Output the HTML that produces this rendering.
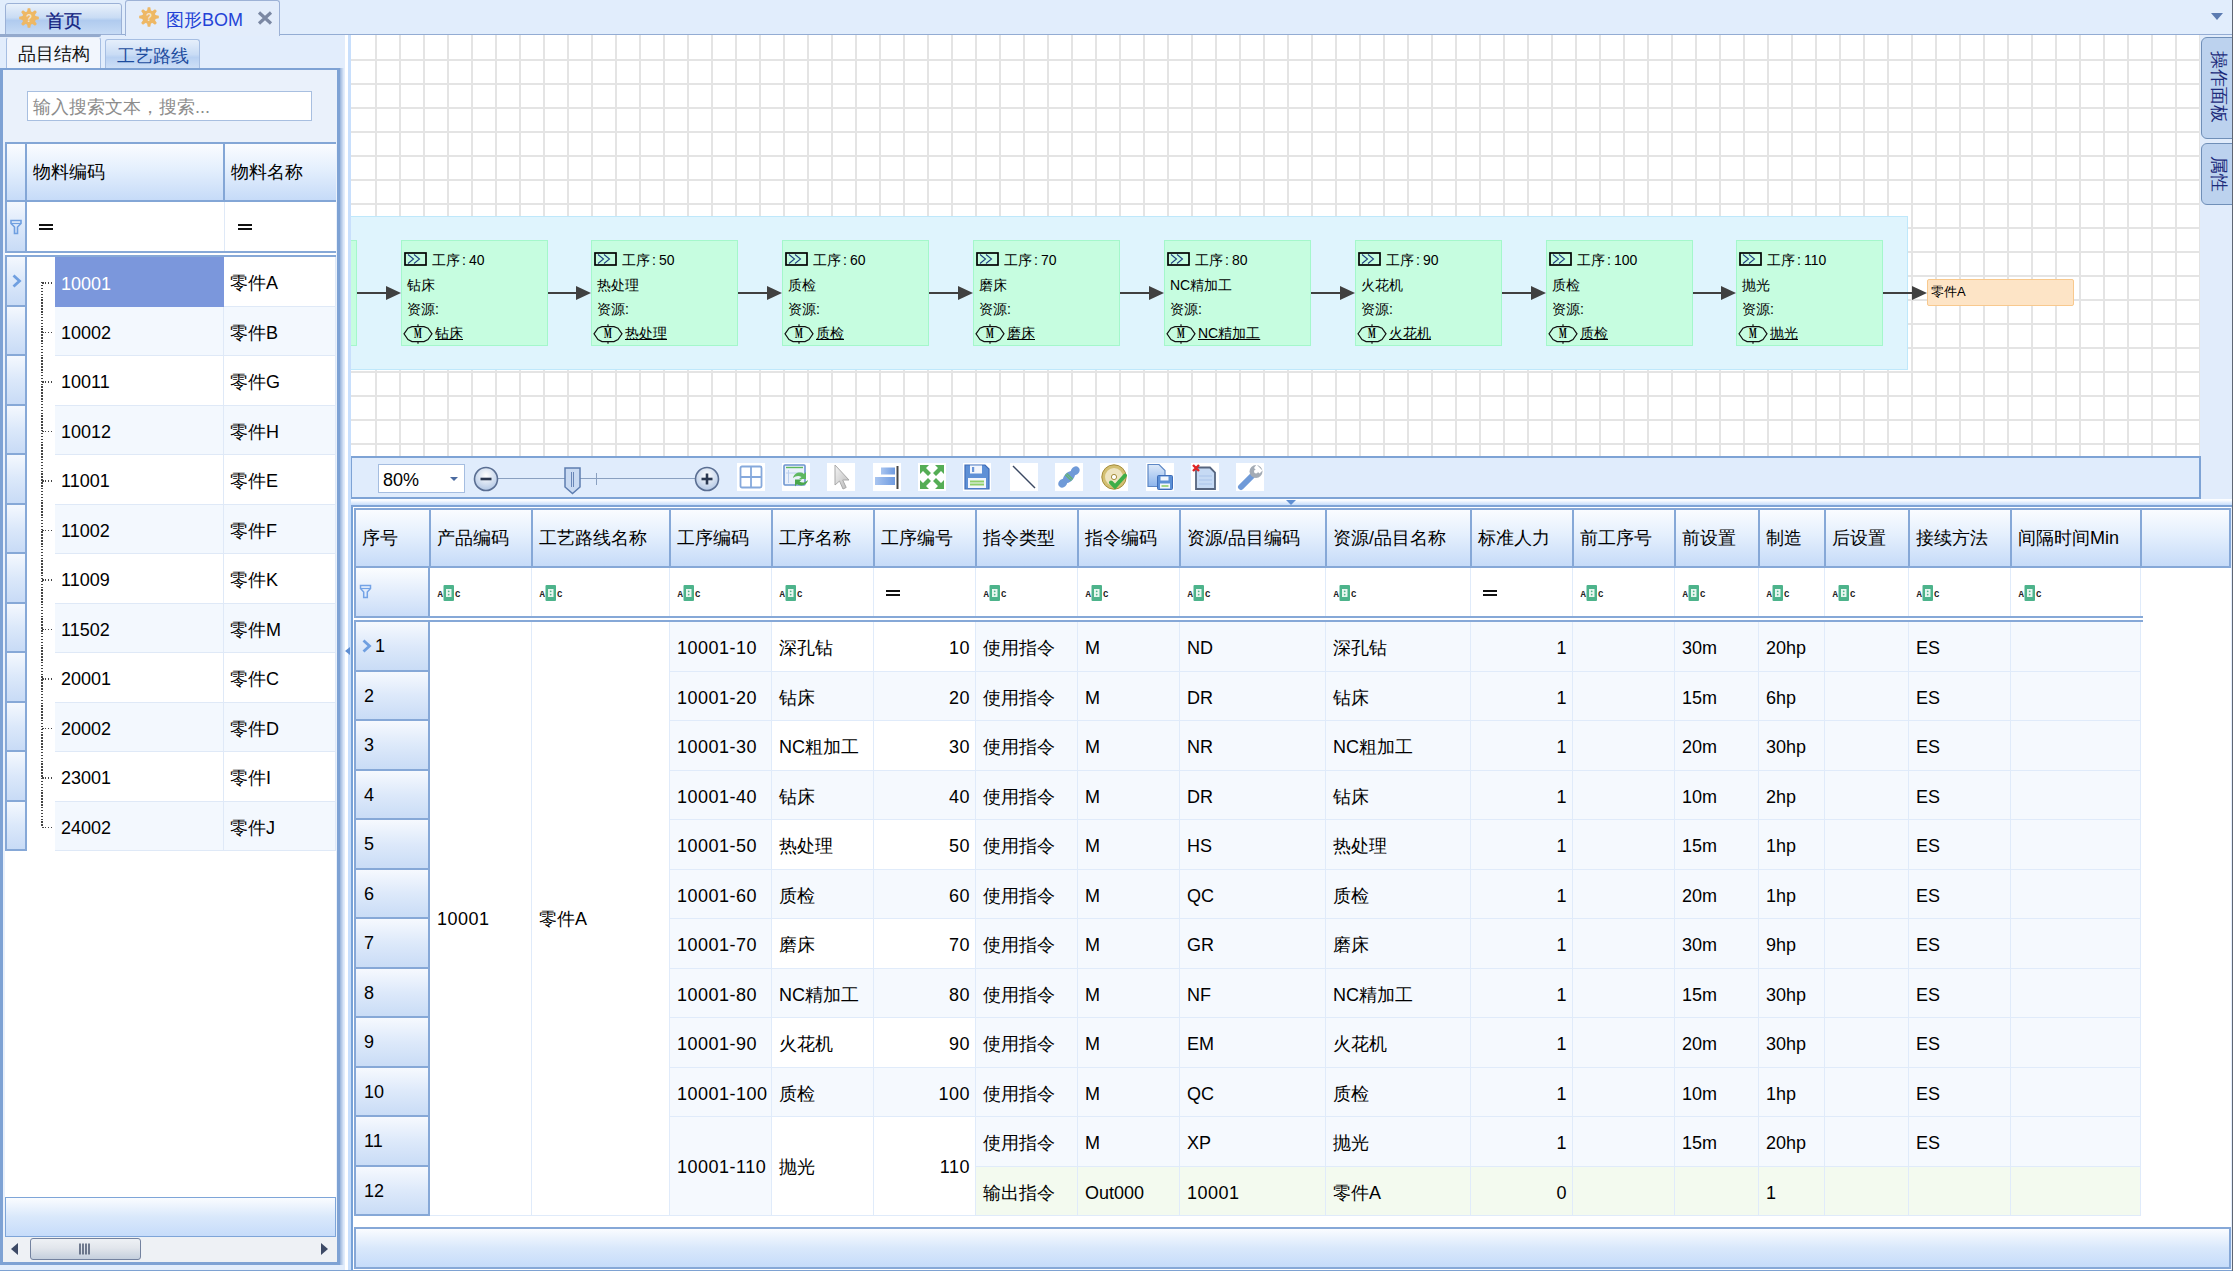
<!DOCTYPE html><html><head><meta charset="utf-8"><style>
*{box-sizing:border-box;margin:0;padding:0}
html,body{width:2233px;height:1271px;overflow:hidden}
body{position:relative;background:#e2edfc;font-family:"Liberation Sans",sans-serif;font-size:18px;color:#000}
.a{position:absolute}
.t{position:absolute;white-space:nowrap;line-height:20px}
.hd{position:absolute;background:linear-gradient(#fafcff,#e4effd 45%,#c6dbf8);border-right:2px solid #83a6d6}
.ind{position:absolute;background:linear-gradient(#f4f8fe,#dbe8fa 50%,#c8dbf6);border-bottom:2px solid #86a8d7;border-right:2px solid #86a8d7}
.c{position:absolute;border-right:1px solid #dfe9f7;border-bottom:1px solid #dfe9f7;white-space:nowrap;line-height:20px;padding-left:6px;padding-top:4px;display:flex;align-items:center}
</style></head><body><div class="a" style="left:0;top:0;width:2233px;height:35px;background:#e1edfc;border-bottom:1.5px solid #93acd3"></div><div class="a" style="left:5px;top:3px;width:117px;height:32px;border:1px solid #9bb1d6;border-radius:3px 3px 0 0;background:linear-gradient(#e9f1fb,#c9dcf4 45%,#b0cbef 55%,#c6dbf5)"></div><svg class="a" style="left:19px;top:8px" width="20" height="20" viewBox="0 0 20 20"><path d="M16.31 8.05 L19.82 8.72 L19.82 11.28 L16.31 11.95 L15.84 13.08 L17.85 16.03 L16.03 17.85 L13.08 15.84 L11.95 16.31 L11.28 19.82 L8.72 19.82 L8.05 16.31 L6.92 15.84 L3.97 17.85 L2.15 16.03 L4.16 13.08 L3.69 11.95 L0.18 11.28 L0.18 8.72 L3.69 8.05 L4.16 6.92 L2.15 3.97 L3.97 2.15 L6.92 4.16 L8.05 3.69 L8.72 0.18 L11.28 0.18 L11.95 3.69 L13.08 4.16 L16.03 2.15 L17.85 3.97 L15.84 6.92Z" fill="#eeb865"/><circle cx="10" cy="10" r="6.8" fill="#eeb865"/><text x="10" y="14" font-size="10" text-anchor="middle" fill="#f3e6d2" font-weight="bold" font-family="Liberation Sans">?</text></svg><div class="t" style="left:46px;top:11px;color:#102080;-webkit-text-stroke:0.3px #102080">首页</div><div class="a" style="left:125px;top:0;width:155px;height:36px;border:1px solid #9db2d6;border-bottom:none;border-radius:3px 3px 0 0;background:#e3edfb"></div><svg class="a" style="left:139px;top:7px" width="20" height="20" viewBox="0 0 20 20"><path d="M16.31 8.05 L19.82 8.72 L19.82 11.28 L16.31 11.95 L15.84 13.08 L17.85 16.03 L16.03 17.85 L13.08 15.84 L11.95 16.31 L11.28 19.82 L8.72 19.82 L8.05 16.31 L6.92 15.84 L3.97 17.85 L2.15 16.03 L4.16 13.08 L3.69 11.95 L0.18 11.28 L0.18 8.72 L3.69 8.05 L4.16 6.92 L2.15 3.97 L3.97 2.15 L6.92 4.16 L8.05 3.69 L8.72 0.18 L11.28 0.18 L11.95 3.69 L13.08 4.16 L16.03 2.15 L17.85 3.97 L15.84 6.92Z" fill="#eeb865"/><circle cx="10" cy="10" r="6.8" fill="#eeb865"/><text x="10" y="14" font-size="10" text-anchor="middle" fill="#f3e6d2" font-weight="bold" font-family="Liberation Sans">?</text></svg><div class="t" style="left:166px;top:10px;color:#2443d6">图形BOM</div><svg class="a" style="left:257px;top:11px" width="16" height="14" viewBox="0 0 16 14"><path d="M2 1.5l12 11M14 1.5l-12 11" stroke="#7b88a3" stroke-width="3.2"/></svg><div class="a" style="left:2211px;top:13px;width:0;height:0;border-left:6px solid transparent;border-right:6px solid transparent;border-top:7px solid #5b7bb1"></div><div class="a" style="left:0;top:34px;width:101px;height:2.6px;background:#94aacd;border-radius:0 0 2px 0"></div><div class="a" style="left:6px;top:37px;width:95px;height:33px;border:1px solid #a6bee2;border-top-color:#e8eff9;border-bottom:none;border-radius:3px 3px 0 0;background:#f2f6fd"></div><div class="t" style="left:18px;top:44px;color:#111">品目结构</div><div class="a" style="left:105px;top:39px;width:95px;height:30px;border:1px solid #a6bee2;border-bottom:none;border-radius:3px 3px 0 0;background:linear-gradient(#e6effb,#c9dcf5 50%,#b9d1f2 60%,#cfe0f7)"></div><div class="t" style="left:117px;top:46px;color:#1d4c9e">工艺路线</div><div class="a" style="left:0;top:68px;width:340px;height:1197px;border:3px solid #7ea2d4;border-top-width:2px;background:#eaf1fb"></div><div class="a" style="left:27px;top:91px;width:285px;height:30px;border:1px solid #a8bfe0;background:#fff"></div><div class="t" style="left:33px;top:97px;color:#8c8c8c">输入搜索文本，搜索...</div><div class="a" style="left:5px;top:142px;width:331px;height:1055px;background:#fff"></div><div class="a" style="left:5px;top:142px;width:331px;height:60px;border-top:2px solid #83a6d6;border-bottom:2px solid #83a6d6"></div><div class="hd" style="left:5px;top:144px;width:22px;height:56px;border-left:2px solid #83a6d6"></div><div class="hd" style="left:27px;top:144px;width:198px;height:56px"></div><div class="hd" style="left:225px;top:144px;width:111px;height:56px;border-right:none"></div><div class="t" style="left:33px;top:162px">物料编码</div><div class="t" style="left:231px;top:162px">物料名称</div><div class="ind" style="left:5px;top:202px;width:22px;height:49px;border-left:2px solid #86a8d7;border-bottom:none"></div><div class="a" style="left:224px;top:202px;width:1px;height:49px;background:#dfe9f7"></div><svg class="a" style="left:9px;top:219px" width="14" height="16" viewBox="0 0 14 16"><path d="M2 1.5h10v3l-3.5 3.5v6.5h-3v-6.5L2 4.5z" fill="none" stroke="#6f9fe0" stroke-width="1.6"/><path d="M2 4.5h10" stroke="#6f9fe0" stroke-width="1.2"/></svg><div class="a" style="left:39px;top:223.5px;width:14px;height:6px;border-top:2px solid #111;border-bottom:2px solid #111"></div><div class="a" style="left:238px;top:223.5px;width:14px;height:6px;border-top:2px solid #111;border-bottom:2px solid #111"></div><div class="a" style="left:5px;top:251px;width:331px;height:6px;border-top:2px solid #86a8d7;border-bottom:2px solid #86a8d7;background:#fff"></div><div class="ind" style="left:5px;top:257.0px;width:22px;height:49.5px;border-left:2px solid #86a8d7"></div><div class="c" style="left:55px;top:257.0px;width:169px;height:49.5px;background:#7b97dc;color:#fff;border:none">10001</div><div class="c" style="left:224px;top:257.0px;width:112px;height:49.5px;background:#fff">零件A</div><div class="a" style="left:42px;top:282.0px;width:12px;height:1.6px;background:repeating-linear-gradient(90deg,#444 0 1.5px,transparent 1.5px 2.9px)"></div><div class="ind" style="left:5px;top:306.5px;width:22px;height:49.5px;border-left:2px solid #86a8d7"></div><div class="c" style="left:55px;top:306.5px;width:169px;height:49.5px;background:#f3f8fe">10002</div><div class="c" style="left:224px;top:306.5px;width:112px;height:49.5px;background:#f3f8fe">零件B</div><div class="a" style="left:42px;top:331.5px;width:12px;height:1.6px;background:repeating-linear-gradient(90deg,#444 0 1.5px,transparent 1.5px 2.9px)"></div><div class="ind" style="left:5px;top:356.0px;width:22px;height:49.5px;border-left:2px solid #86a8d7"></div><div class="c" style="left:55px;top:356.0px;width:169px;height:49.5px;background:#fff">10011</div><div class="c" style="left:224px;top:356.0px;width:112px;height:49.5px;background:#fff">零件G</div><div class="a" style="left:42px;top:381.0px;width:12px;height:1.6px;background:repeating-linear-gradient(90deg,#444 0 1.5px,transparent 1.5px 2.9px)"></div><div class="ind" style="left:5px;top:405.5px;width:22px;height:49.5px;border-left:2px solid #86a8d7"></div><div class="c" style="left:55px;top:405.5px;width:169px;height:49.5px;background:#f3f8fe">10012</div><div class="c" style="left:224px;top:405.5px;width:112px;height:49.5px;background:#f3f8fe">零件H</div><div class="a" style="left:42px;top:430.5px;width:12px;height:1.6px;background:repeating-linear-gradient(90deg,#444 0 1.5px,transparent 1.5px 2.9px)"></div><div class="ind" style="left:5px;top:455.0px;width:22px;height:49.5px;border-left:2px solid #86a8d7"></div><div class="c" style="left:55px;top:455.0px;width:169px;height:49.5px;background:#fff">11001</div><div class="c" style="left:224px;top:455.0px;width:112px;height:49.5px;background:#fff">零件E</div><div class="a" style="left:42px;top:480.0px;width:12px;height:1.6px;background:repeating-linear-gradient(90deg,#444 0 1.5px,transparent 1.5px 2.9px)"></div><div class="ind" style="left:5px;top:504.5px;width:22px;height:49.5px;border-left:2px solid #86a8d7"></div><div class="c" style="left:55px;top:504.5px;width:169px;height:49.5px;background:#f3f8fe">11002</div><div class="c" style="left:224px;top:504.5px;width:112px;height:49.5px;background:#f3f8fe">零件F</div><div class="a" style="left:42px;top:529.5px;width:12px;height:1.6px;background:repeating-linear-gradient(90deg,#444 0 1.5px,transparent 1.5px 2.9px)"></div><div class="ind" style="left:5px;top:554.0px;width:22px;height:49.5px;border-left:2px solid #86a8d7"></div><div class="c" style="left:55px;top:554.0px;width:169px;height:49.5px;background:#fff">11009</div><div class="c" style="left:224px;top:554.0px;width:112px;height:49.5px;background:#fff">零件K</div><div class="a" style="left:42px;top:579.0px;width:12px;height:1.6px;background:repeating-linear-gradient(90deg,#444 0 1.5px,transparent 1.5px 2.9px)"></div><div class="ind" style="left:5px;top:603.5px;width:22px;height:49.5px;border-left:2px solid #86a8d7"></div><div class="c" style="left:55px;top:603.5px;width:169px;height:49.5px;background:#f3f8fe">11502</div><div class="c" style="left:224px;top:603.5px;width:112px;height:49.5px;background:#f3f8fe">零件M</div><div class="a" style="left:42px;top:628.5px;width:12px;height:1.6px;background:repeating-linear-gradient(90deg,#444 0 1.5px,transparent 1.5px 2.9px)"></div><div class="ind" style="left:5px;top:653.0px;width:22px;height:49.5px;border-left:2px solid #86a8d7"></div><div class="c" style="left:55px;top:653.0px;width:169px;height:49.5px;background:#fff">20001</div><div class="c" style="left:224px;top:653.0px;width:112px;height:49.5px;background:#fff">零件C</div><div class="a" style="left:42px;top:678.0px;width:12px;height:1.6px;background:repeating-linear-gradient(90deg,#444 0 1.5px,transparent 1.5px 2.9px)"></div><div class="ind" style="left:5px;top:702.5px;width:22px;height:49.5px;border-left:2px solid #86a8d7"></div><div class="c" style="left:55px;top:702.5px;width:169px;height:49.5px;background:#f3f8fe">20002</div><div class="c" style="left:224px;top:702.5px;width:112px;height:49.5px;background:#f3f8fe">零件D</div><div class="a" style="left:42px;top:727.5px;width:12px;height:1.6px;background:repeating-linear-gradient(90deg,#444 0 1.5px,transparent 1.5px 2.9px)"></div><div class="ind" style="left:5px;top:752.0px;width:22px;height:49.5px;border-left:2px solid #86a8d7"></div><div class="c" style="left:55px;top:752.0px;width:169px;height:49.5px;background:#fff">23001</div><div class="c" style="left:224px;top:752.0px;width:112px;height:49.5px;background:#fff">零件I</div><div class="a" style="left:42px;top:777.0px;width:12px;height:1.6px;background:repeating-linear-gradient(90deg,#444 0 1.5px,transparent 1.5px 2.9px)"></div><div class="ind" style="left:5px;top:801.5px;width:22px;height:49.5px;border-left:2px solid #86a8d7"></div><div class="c" style="left:55px;top:801.5px;width:169px;height:49.5px;background:#f3f8fe">24002</div><div class="c" style="left:224px;top:801.5px;width:112px;height:49.5px;background:#f3f8fe">零件J</div><div class="a" style="left:42px;top:826.5px;width:12px;height:1.6px;background:repeating-linear-gradient(90deg,#444 0 1.5px,transparent 1.5px 2.9px)"></div><svg class="a" style="left:11px;top:274px" width="11" height="14" viewBox="0 0 11 14"><path d="M2.5 1.5l6 5.5-6 5.5" fill="none" stroke="#6f9fe0" stroke-width="2.8"/></svg><div class="a" style="left:41px;top:282px;width:1.6px;height:545px;background:repeating-linear-gradient(#444 0 1.5px,transparent 1.5px 2.9px)"></div><div class="a" style="left:5px;top:1197px;width:331px;height:40px;border:1.5px solid #7ea5d8;background:linear-gradient(#fafcff,#d9e8fb 50%,#c6dcfa)"></div><div class="a" style="left:3px;top:1237px;width:334px;height:25px;background:#eef1f5"></div><div class="a" style="left:30px;top:1238px;width:111px;height:22px;border:1.5px solid #73829f;border-radius:3px;background:linear-gradient(#eef1f5,#e2e6ec 45%,#c4cfdd)"></div><svg class="a" style="left:79px;top:1243px" width="12" height="12" viewBox="0 0 12 12"><path d="M1 0.5v11M4 0.5v11M7 0.5v11M10 0.5v11" stroke="#3f4c66" stroke-width="1.4"/></svg><div class="a" style="left:11px;top:1243px;width:0;height:0;border-top:6px solid transparent;border-bottom:6px solid transparent;border-right:7px solid #3d4a66"></div><div class="a" style="left:321px;top:1243px;width:0;height:0;border-top:6px solid transparent;border-bottom:6px solid transparent;border-left:7px solid #3d4a66"></div><div class="a" style="left:339px;top:35px;width:12px;height:1236px;background:linear-gradient(90deg,transparent 6px,#ffffff 6px,#ffffff 9px,#c8dffc 9px)"></div><div class="a" style="left:340px;top:68px;width:4px;height:1197px;background:linear-gradient(90deg,#98b3da,rgba(226,237,252,0))"></div><div class="a" style="left:345px;top:647px;width:0;height:0;border-top:4px solid transparent;border-bottom:4px solid transparent;border-right:5px solid #5f8fd3"></div><div class="a" style="left:351px;top:35px;width:1849px;height:421px;background-color:#fff;overflow:hidden"><div class="a" style="left:2px;top:0;width:1847px;height:421px;background-image:linear-gradient(90deg,transparent 22px,#e4e4e4 22px);background-size:24px 24px"></div><div class="a" style="left:0;top:2px;width:1849px;height:419px;background-image:linear-gradient(transparent 22px,#e4e4e4 22px);background-size:24px 24px"></div><div class="a" style="left:0;top:181px;width:1557px;height:154px;background:#dff4fd;border:1px solid #bfe8fb;border-left:none"></div><div class="a" style="left:-5px;top:205px;width:11px;height:106px;background:#c6fde0;border:1.5px solid #a4f7cb"></div><div class="a" style="left:6.0px;top:257px;width:32.0px;height:2px;background:#404040"></div><div class="a" style="left:35.0px;top:251px;width:0;height:0;border-top:7px solid transparent;border-bottom:7px solid transparent;border-left:15px solid #404040"></div><div class="a" style="left:50.0px;top:205px;width:147px;height:106px;background:#c6fde0;border:1.5px solid #a4f7cb"></div><svg class="a" style="left:53.0px;top:217px" width="23" height="14" viewBox="0 0 23 14"><rect x="1" y="1" width="21" height="12" fill="none" stroke="#000" stroke-width="1.7"/><path d="M4 2.5l5.5 4.5-5.5 4.5M10 2.5l5.5 4.5-5.5 4.5" fill="none" stroke="#1f3f80" stroke-width="1.1"/></svg><div class="t" style="left:81.0px;top:217px;font-size:14px;line-height:16px">工序<span style="margin:0 3px 0 2px">:</span>40</div><div class="t" style="left:56.0px;top:242px;font-size:14px;line-height:16px">钻床</div><div class="t" style="left:56.0px;top:266px;font-size:14px;line-height:16px">资源:</div><svg class="a" style="left:52.0px;top:289px" width="30" height="20" viewBox="0 0 30 20"><path d="M1 9.8L5 4.2L9 2.6H21L25 4.2L29 9.8L25 15.6L21 17.6H9L5 15.6Z" fill="none" stroke="#111" stroke-width="1.2"/><path d="M15 0.3V2.6M15 17.6V19.8" stroke="#111" stroke-width="1.2"/><text x="15" y="13.6" font-size="15" font-weight="bold" text-anchor="middle" font-family="Liberation Serif" transform="translate(15 0) scale(0.55 1) translate(-15 0)">M</text></svg><div class="t" style="left:84.0px;top:290px;font-size:14px;line-height:16px;text-decoration:underline">钻床</div><div class="a" style="left:197.0px;top:257px;width:31.0px;height:2px;background:#404040"></div><div class="a" style="left:225.0px;top:251px;width:0;height:0;border-top:7px solid transparent;border-bottom:7px solid transparent;border-left:15px solid #404040"></div><div class="a" style="left:240.0px;top:205px;width:147px;height:106px;background:#c6fde0;border:1.5px solid #a4f7cb"></div><svg class="a" style="left:243.0px;top:217px" width="23" height="14" viewBox="0 0 23 14"><rect x="1" y="1" width="21" height="12" fill="none" stroke="#000" stroke-width="1.7"/><path d="M4 2.5l5.5 4.5-5.5 4.5M10 2.5l5.5 4.5-5.5 4.5" fill="none" stroke="#1f3f80" stroke-width="1.1"/></svg><div class="t" style="left:271.0px;top:217px;font-size:14px;line-height:16px">工序<span style="margin:0 3px 0 2px">:</span>50</div><div class="t" style="left:246.0px;top:242px;font-size:14px;line-height:16px">热处理</div><div class="t" style="left:246.0px;top:266px;font-size:14px;line-height:16px">资源:</div><svg class="a" style="left:242.0px;top:289px" width="30" height="20" viewBox="0 0 30 20"><path d="M1 9.8L5 4.2L9 2.6H21L25 4.2L29 9.8L25 15.6L21 17.6H9L5 15.6Z" fill="none" stroke="#111" stroke-width="1.2"/><path d="M15 0.3V2.6M15 17.6V19.8" stroke="#111" stroke-width="1.2"/><text x="15" y="13.6" font-size="15" font-weight="bold" text-anchor="middle" font-family="Liberation Serif" transform="translate(15 0) scale(0.55 1) translate(-15 0)">M</text></svg><div class="t" style="left:274.0px;top:290px;font-size:14px;line-height:16px;text-decoration:underline">热处理</div><div class="a" style="left:387.0px;top:257px;width:32.0px;height:2px;background:#404040"></div><div class="a" style="left:416.0px;top:251px;width:0;height:0;border-top:7px solid transparent;border-bottom:7px solid transparent;border-left:15px solid #404040"></div><div class="a" style="left:431.0px;top:205px;width:147px;height:106px;background:#c6fde0;border:1.5px solid #a4f7cb"></div><svg class="a" style="left:434.0px;top:217px" width="23" height="14" viewBox="0 0 23 14"><rect x="1" y="1" width="21" height="12" fill="none" stroke="#000" stroke-width="1.7"/><path d="M4 2.5l5.5 4.5-5.5 4.5M10 2.5l5.5 4.5-5.5 4.5" fill="none" stroke="#1f3f80" stroke-width="1.1"/></svg><div class="t" style="left:462.0px;top:217px;font-size:14px;line-height:16px">工序<span style="margin:0 3px 0 2px">:</span>60</div><div class="t" style="left:437.0px;top:242px;font-size:14px;line-height:16px">质检</div><div class="t" style="left:437.0px;top:266px;font-size:14px;line-height:16px">资源:</div><svg class="a" style="left:433.0px;top:289px" width="30" height="20" viewBox="0 0 30 20"><path d="M1 9.8L5 4.2L9 2.6H21L25 4.2L29 9.8L25 15.6L21 17.6H9L5 15.6Z" fill="none" stroke="#111" stroke-width="1.2"/><path d="M15 0.3V2.6M15 17.6V19.8" stroke="#111" stroke-width="1.2"/><text x="15" y="13.6" font-size="15" font-weight="bold" text-anchor="middle" font-family="Liberation Serif" transform="translate(15 0) scale(0.55 1) translate(-15 0)">M</text></svg><div class="t" style="left:465.0px;top:290px;font-size:14px;line-height:16px;text-decoration:underline">质检</div><div class="a" style="left:578.0px;top:257px;width:32.0px;height:2px;background:#404040"></div><div class="a" style="left:607.0px;top:251px;width:0;height:0;border-top:7px solid transparent;border-bottom:7px solid transparent;border-left:15px solid #404040"></div><div class="a" style="left:622.0px;top:205px;width:147px;height:106px;background:#c6fde0;border:1.5px solid #a4f7cb"></div><svg class="a" style="left:625.0px;top:217px" width="23" height="14" viewBox="0 0 23 14"><rect x="1" y="1" width="21" height="12" fill="none" stroke="#000" stroke-width="1.7"/><path d="M4 2.5l5.5 4.5-5.5 4.5M10 2.5l5.5 4.5-5.5 4.5" fill="none" stroke="#1f3f80" stroke-width="1.1"/></svg><div class="t" style="left:653.0px;top:217px;font-size:14px;line-height:16px">工序<span style="margin:0 3px 0 2px">:</span>70</div><div class="t" style="left:628.0px;top:242px;font-size:14px;line-height:16px">磨床</div><div class="t" style="left:628.0px;top:266px;font-size:14px;line-height:16px">资源:</div><svg class="a" style="left:624.0px;top:289px" width="30" height="20" viewBox="0 0 30 20"><path d="M1 9.8L5 4.2L9 2.6H21L25 4.2L29 9.8L25 15.6L21 17.6H9L5 15.6Z" fill="none" stroke="#111" stroke-width="1.2"/><path d="M15 0.3V2.6M15 17.6V19.8" stroke="#111" stroke-width="1.2"/><text x="15" y="13.6" font-size="15" font-weight="bold" text-anchor="middle" font-family="Liberation Serif" transform="translate(15 0) scale(0.55 1) translate(-15 0)">M</text></svg><div class="t" style="left:656.0px;top:290px;font-size:14px;line-height:16px;text-decoration:underline">磨床</div><div class="a" style="left:769.0px;top:257px;width:32.0px;height:2px;background:#404040"></div><div class="a" style="left:798.0px;top:251px;width:0;height:0;border-top:7px solid transparent;border-bottom:7px solid transparent;border-left:15px solid #404040"></div><div class="a" style="left:813.0px;top:205px;width:147px;height:106px;background:#c6fde0;border:1.5px solid #a4f7cb"></div><svg class="a" style="left:816.0px;top:217px" width="23" height="14" viewBox="0 0 23 14"><rect x="1" y="1" width="21" height="12" fill="none" stroke="#000" stroke-width="1.7"/><path d="M4 2.5l5.5 4.5-5.5 4.5M10 2.5l5.5 4.5-5.5 4.5" fill="none" stroke="#1f3f80" stroke-width="1.1"/></svg><div class="t" style="left:844.0px;top:217px;font-size:14px;line-height:16px">工序<span style="margin:0 3px 0 2px">:</span>80</div><div class="t" style="left:819.0px;top:242px;font-size:14px;line-height:16px">NC精加工</div><div class="t" style="left:819.0px;top:266px;font-size:14px;line-height:16px">资源:</div><svg class="a" style="left:815.0px;top:289px" width="30" height="20" viewBox="0 0 30 20"><path d="M1 9.8L5 4.2L9 2.6H21L25 4.2L29 9.8L25 15.6L21 17.6H9L5 15.6Z" fill="none" stroke="#111" stroke-width="1.2"/><path d="M15 0.3V2.6M15 17.6V19.8" stroke="#111" stroke-width="1.2"/><text x="15" y="13.6" font-size="15" font-weight="bold" text-anchor="middle" font-family="Liberation Serif" transform="translate(15 0) scale(0.55 1) translate(-15 0)">M</text></svg><div class="t" style="left:847.0px;top:290px;font-size:14px;line-height:16px;text-decoration:underline">NC精加工</div><div class="a" style="left:960.0px;top:257px;width:32.0px;height:2px;background:#404040"></div><div class="a" style="left:989.0px;top:251px;width:0;height:0;border-top:7px solid transparent;border-bottom:7px solid transparent;border-left:15px solid #404040"></div><div class="a" style="left:1004.0px;top:205px;width:147px;height:106px;background:#c6fde0;border:1.5px solid #a4f7cb"></div><svg class="a" style="left:1007.0px;top:217px" width="23" height="14" viewBox="0 0 23 14"><rect x="1" y="1" width="21" height="12" fill="none" stroke="#000" stroke-width="1.7"/><path d="M4 2.5l5.5 4.5-5.5 4.5M10 2.5l5.5 4.5-5.5 4.5" fill="none" stroke="#1f3f80" stroke-width="1.1"/></svg><div class="t" style="left:1035.0px;top:217px;font-size:14px;line-height:16px">工序<span style="margin:0 3px 0 2px">:</span>90</div><div class="t" style="left:1010.0px;top:242px;font-size:14px;line-height:16px">火花机</div><div class="t" style="left:1010.0px;top:266px;font-size:14px;line-height:16px">资源:</div><svg class="a" style="left:1006.0px;top:289px" width="30" height="20" viewBox="0 0 30 20"><path d="M1 9.8L5 4.2L9 2.6H21L25 4.2L29 9.8L25 15.6L21 17.6H9L5 15.6Z" fill="none" stroke="#111" stroke-width="1.2"/><path d="M15 0.3V2.6M15 17.6V19.8" stroke="#111" stroke-width="1.2"/><text x="15" y="13.6" font-size="15" font-weight="bold" text-anchor="middle" font-family="Liberation Serif" transform="translate(15 0) scale(0.55 1) translate(-15 0)">M</text></svg><div class="t" style="left:1038.0px;top:290px;font-size:14px;line-height:16px;text-decoration:underline">火花机</div><div class="a" style="left:1151.0px;top:257px;width:32.0px;height:2px;background:#404040"></div><div class="a" style="left:1180.0px;top:251px;width:0;height:0;border-top:7px solid transparent;border-bottom:7px solid transparent;border-left:15px solid #404040"></div><div class="a" style="left:1195.0px;top:205px;width:147px;height:106px;background:#c6fde0;border:1.5px solid #a4f7cb"></div><svg class="a" style="left:1198.0px;top:217px" width="23" height="14" viewBox="0 0 23 14"><rect x="1" y="1" width="21" height="12" fill="none" stroke="#000" stroke-width="1.7"/><path d="M4 2.5l5.5 4.5-5.5 4.5M10 2.5l5.5 4.5-5.5 4.5" fill="none" stroke="#1f3f80" stroke-width="1.1"/></svg><div class="t" style="left:1226.0px;top:217px;font-size:14px;line-height:16px">工序<span style="margin:0 3px 0 2px">:</span>100</div><div class="t" style="left:1201.0px;top:242px;font-size:14px;line-height:16px">质检</div><div class="t" style="left:1201.0px;top:266px;font-size:14px;line-height:16px">资源:</div><svg class="a" style="left:1197.0px;top:289px" width="30" height="20" viewBox="0 0 30 20"><path d="M1 9.8L5 4.2L9 2.6H21L25 4.2L29 9.8L25 15.6L21 17.6H9L5 15.6Z" fill="none" stroke="#111" stroke-width="1.2"/><path d="M15 0.3V2.6M15 17.6V19.8" stroke="#111" stroke-width="1.2"/><text x="15" y="13.6" font-size="15" font-weight="bold" text-anchor="middle" font-family="Liberation Serif" transform="translate(15 0) scale(0.55 1) translate(-15 0)">M</text></svg><div class="t" style="left:1229.0px;top:290px;font-size:14px;line-height:16px;text-decoration:underline">质检</div><div class="a" style="left:1342.0px;top:257px;width:31.0px;height:2px;background:#404040"></div><div class="a" style="left:1370.0px;top:251px;width:0;height:0;border-top:7px solid transparent;border-bottom:7px solid transparent;border-left:15px solid #404040"></div><div class="a" style="left:1385.0px;top:205px;width:147px;height:106px;background:#c6fde0;border:1.5px solid #a4f7cb"></div><svg class="a" style="left:1388.0px;top:217px" width="23" height="14" viewBox="0 0 23 14"><rect x="1" y="1" width="21" height="12" fill="none" stroke="#000" stroke-width="1.7"/><path d="M4 2.5l5.5 4.5-5.5 4.5M10 2.5l5.5 4.5-5.5 4.5" fill="none" stroke="#1f3f80" stroke-width="1.1"/></svg><div class="t" style="left:1416.0px;top:217px;font-size:14px;line-height:16px">工序<span style="margin:0 3px 0 2px">:</span>110</div><div class="t" style="left:1391.0px;top:242px;font-size:14px;line-height:16px">抛光</div><div class="t" style="left:1391.0px;top:266px;font-size:14px;line-height:16px">资源:</div><svg class="a" style="left:1387.0px;top:289px" width="30" height="20" viewBox="0 0 30 20"><path d="M1 9.8L5 4.2L9 2.6H21L25 4.2L29 9.8L25 15.6L21 17.6H9L5 15.6Z" fill="none" stroke="#111" stroke-width="1.2"/><path d="M15 0.3V2.6M15 17.6V19.8" stroke="#111" stroke-width="1.2"/><text x="15" y="13.6" font-size="15" font-weight="bold" text-anchor="middle" font-family="Liberation Serif" transform="translate(15 0) scale(0.55 1) translate(-15 0)">M</text></svg><div class="t" style="left:1419.0px;top:290px;font-size:14px;line-height:16px;text-decoration:underline">抛光</div><div class="a" style="left:1532.0px;top:257px;width:32.0px;height:2px;background:#404040"></div><div class="a" style="left:1561.0px;top:251px;width:0;height:0;border-top:7px solid transparent;border-bottom:7px solid transparent;border-left:15px solid #404040"></div><div class="a" style="left:1576px;top:244px;width:147px;height:27px;background:#fde4c6;border:1px solid #f8c98e;border-radius:2px"></div><div class="t" style="left:1580px;top:249px;font-size:13px;line-height:16px">零件A</div></div><div class="a" style="left:2200px;top:35px;width:33px;height:472px;background:#e1ecfb"></div><div class="a" style="left:2201px;top:37px;width:40px;height:102px;border:1px solid #6f8fb8;border-radius:6px;background:#bcd2ee"></div><div class="a" style="left:2201px;top:143px;width:40px;height:62px;border:1px solid #6f8fb8;border-radius:6px;background:#bcd2ee"></div><div class="t" style="left:2183px;top:77px;width:72px;height:20px;transform:rotate(90deg);color:#1b2a7a;line-height:20px;text-align:center">操作面板</div><div class="t" style="left:2201px;top:164px;width:36px;height:20px;transform:rotate(90deg);color:#1b2a7a;line-height:20px;text-align:center">属性</div><div class="a" style="left:351px;top:456px;width:1850px;height:43px;background:#e0ecfc;border:2px solid #7ea3d5;border-left:1px solid #7ea3d5"></div><div class="a" style="left:378px;top:464px;width:87px;height:29px;border:1px solid #a5bde0;background:#fff"></div><div class="t" style="left:383px;top:470px;font-size:18px">80%</div><div class="a" style="left:450px;top:477px;width:0;height:0;border-left:4px solid transparent;border-right:4px solid transparent;border-top:4px solid #4a6aa0"></div><div class="a" style="left:498px;top:478px;width:197px;height:1px;background:#8aa0c0"></div><div class="a" style="left:596px;top:473px;width:1px;height:12px;background:#8aa0c0"></div><svg class="a" style="left:473px;top:466px" width="26" height="26" viewBox="0 0 26 26"><defs><radialGradient id="g486" cx="0.5" cy="0.35" r="0.6"><stop offset="0" stop-color="#ffffff"/><stop offset="1" stop-color="#b8cbe6"/></radialGradient></defs><circle cx="13" cy="13" r="11.5" fill="url(#g486)" stroke="#5a6e92" stroke-width="1.6"/><path d="M7.5 13h11" stroke="#2b3850" stroke-width="2.6"/></svg><svg class="a" style="left:694px;top:466px" width="26" height="26" viewBox="0 0 26 26"><defs><radialGradient id="g707" cx="0.5" cy="0.35" r="0.6"><stop offset="0" stop-color="#ffffff"/><stop offset="1" stop-color="#b8cbe6"/></radialGradient></defs><circle cx="13" cy="13" r="11.5" fill="url(#g707)" stroke="#5a6e92" stroke-width="1.6"/><path d="M7.5 13h11" stroke="#2b3850" stroke-width="2.6"/><path d="M13 7.5v11" stroke="#2b3850" stroke-width="2.6"/></svg><svg class="a" style="left:563px;top:466px" width="19" height="29" viewBox="0 0 19 29"><path d="M2 2h15v19l-7.5 6.5L2 21z" fill="#c9daf2" stroke="#5d7db0" stroke-width="1.5"/><path d="M8.5 6v15M10.5 6v15" stroke="#5d7db0" stroke-width="0.9"/></svg><div class="a" style="left:737px;top:463px;width:28px;height:28px;background:#fff"></div><svg class="a" style="left:737px;top:463px" width="28" height="28" viewBox="0 0 28 28"><rect x="3.5" y="3.5" width="21" height="21" rx="1.5" fill="none" stroke="#86a9dc" stroke-width="1.8"/><path d="M14 3.5v21M3.5 14h21" stroke="#86a9dc" stroke-width="1.8"/></svg><div class="a" style="left:782px;top:463px;width:28px;height:28px;background:#fff"></div><svg class="a" style="left:782px;top:463px" width="28" height="28" viewBox="0 0 28 28"><rect x="2" y="2" width="21" height="20" rx="1" fill="#eaf1fb" stroke="#6d95d0" stroke-width="1.6"/><path d="M4 4.5h17" stroke="#5cb85c" stroke-width="1.4"/><path d="M6.5 7v13M4 10h17" stroke="#bcd0ee" stroke-width="1"/><path d="M11 15c1-5 7-7 11-4l2-2v7h-7l2.5-2c-3-2-6-1-8.5 1z" fill="#5fb860"/><path d="M26 17c-1 5-7 7-11 4l-2 2.5v-7h7l-2.5 2c3 2 6 1 8.5-1.5z" fill="#4aa84c"/></svg><div class="a" style="left:827px;top:463px;width:28px;height:28px;background:#fff"></div><svg class="a" style="left:827px;top:463px" width="28" height="28" viewBox="0 0 28 28"><defs><linearGradient id="cg" x1="0" y1="0" x2="1" y2="1"><stop offset="0" stop-color="#f4f4f4"/><stop offset="1" stop-color="#b9b9b9"/></linearGradient></defs><path d="M8 2v20l4.5-4 3.5 8 3.2-1.5-3.5-7.5H22z" fill="url(#cg)" stroke="#a9a9a9" stroke-width="1"/></svg><div class="a" style="left:873px;top:463px;width:28px;height:28px;background:#fff"></div><svg class="a" style="left:873px;top:463px" width="28" height="28" viewBox="0 0 28 28"><defs><linearGradient id="ag" x1="0" y1="0" x2="1" y2="0"><stop offset="0" stop-color="#a9c5f0"/><stop offset="1" stop-color="#6f9be0"/></linearGradient></defs><rect x="8" y="4.5" width="14" height="7" fill="url(#ag)"/><rect x="2" y="14" width="20" height="8" fill="url(#ag)"/><path d="M24.5 3v23" stroke="#444" stroke-width="2"/></svg><div class="a" style="left:918px;top:463px;width:28px;height:28px;background:#fff"></div><svg class="a" style="left:918px;top:463px" width="28" height="28" viewBox="0 0 28 28"><g fill="#55ad55"><path d="M2 2h9l-3 3 5 5-3 3-5-5-3 3z"/><path d="M26 2v9l-3-3-5 5-3-3 5-5-3-3z"/><path d="M2 26v-9l3 3 5-5 3 3-5 5 3 3z"/><path d="M26 26h-9l3-3-5-5 3-3 5 5 3-3z"/></g></svg><div class="a" style="left:963px;top:463px;width:28px;height:28px;background:#fff"></div><svg class="a" style="left:963px;top:463px" width="28" height="28" viewBox="0 0 28 28"><path d="M2 2h20l4 4v20H2z" fill="#5e90d6" stroke="#3f6db8" stroke-width="1.2"/><rect x="7" y="2.5" width="12" height="8" fill="#f2f6fc"/><rect x="9" y="4" width="2.2" height="5" fill="#6a96d8"/><rect x="5" y="15" width="18" height="10" fill="#f2f6fc"/><path d="M7 18.5h14M7 21.5h14" stroke="#8fcf6a" stroke-width="2"/></svg><div class="a" style="left:1010px;top:463px;width:28px;height:28px;background:#fff"></div><svg class="a" style="left:1010px;top:463px" width="28" height="28" viewBox="0 0 28 28"><path d="M3 3l22 22" stroke="#3b4862" stroke-width="1.5"/></svg><div class="a" style="left:1055px;top:463px;width:28px;height:28px;background:#fff"></div><svg class="a" style="left:1055px;top:463px" width="28" height="28" viewBox="0 0 28 28"><g transform="rotate(-45 14 14)"><path d="M0.5 14c0-4 5-5 8-3 3-2 8-2 11 0 3-2 8-1 8 3s-5 5-8 3c-3 2-8 2-11 0-3 2-8 1-8-3z" fill="#6f9ad8"/><path d="M13 9.8v8.4M15 9.8v8.4" stroke="#62b868" stroke-width="1.2"/></g></svg><div class="a" style="left:1100px;top:463px;width:28px;height:28px;background:#fff"></div><svg class="a" style="left:1100px;top:463px" width="28" height="28" viewBox="0 0 28 28"><circle cx="14" cy="14" r="12.2" fill="#d3bf72" stroke="#a58d3c" stroke-width="1"/><circle cx="14" cy="14" r="9" fill="#eee4c0"/><circle cx="14" cy="14" r="2.6" fill="#fff" stroke="#a58d3c" stroke-width="1"/><path d="M11 19.5l4 4 10-11" fill="none" stroke="#3cae48" stroke-width="4" stroke-linecap="round"/></svg><div class="a" style="left:1146px;top:463px;width:28px;height:28px;background:#fff"></div><svg class="a" style="left:1146px;top:463px" width="28" height="28" viewBox="0 0 28 28"><defs><linearGradient id="dg" x1="0" y1="0" x2="0" y2="1"><stop offset="0" stop-color="#dde9f9"/><stop offset="1" stop-color="#8db5ec"/></linearGradient></defs><path d="M2 1.5h11l6 6v16H2z" fill="url(#dg)" stroke="#5e88c6" stroke-width="1.2"/><rect x="11.5" y="12.5" width="15" height="14" rx="1" fill="#5b8fd6" stroke="#3f6db8" stroke-width="1"/><rect x="14.5" y="13.5" width="8" height="4" fill="#f2f6fc"/><rect x="14" y="20.5" width="10" height="5" fill="#f2f6fc"/><path d="M15.5 23h7" stroke="#8fcf6a" stroke-width="1.6"/></svg><div class="a" style="left:1191px;top:463px;width:28px;height:28px;background:#fff"></div><svg class="a" style="left:1191px;top:463px" width="28" height="28" viewBox="0 0 28 28"><path d="M5 4.5h14l5 5V26H5z" fill="#c6daf4" stroke="#56657f" stroke-width="1.8"/><path d="M8 13h13M8 17h13M8 21h13" stroke="#a9c3ea" stroke-width="1.2"/><path d="M2 2l6 6M8 2l-6 6" stroke="#e02424" stroke-width="2.4"/></svg><div class="a" style="left:1236px;top:463px;width:28px;height:28px;background:#fff"></div><svg class="a" style="left:1236px;top:463px" width="28" height="28" viewBox="0 0 28 28"><path d="M5 24l12-12" stroke="#6f9ad8" stroke-width="6" stroke-linecap="round"/><circle cx="20" cy="8.5" r="6.5" fill="#a3abb5"/><path d="M20.5 1.5l6 6-3 3-5.5-5.5z" fill="#fff"/><circle cx="20" cy="8.5" r="2" fill="#fff"/></svg><div class="a" style="left:351px;top:499px;width:1882px;height:8px;background:linear-gradient(#fbfdff 20%,#c6ddfb);border-bottom:2px solid #7ea3d5"></div><div class="a" style="left:1286px;top:500px;width:0;height:0;border-left:5px solid transparent;border-right:5px solid transparent;border-top:5px solid #5f8fd3"></div><div class="a" style="left:351px;top:507px;width:1880px;height:764px;background:#fff"></div><div class="a" style="left:354px;top:508px;width:1877px;height:60px;border:2px solid #86a8d7;background:linear-gradient(#fafcff,#e4effd 45%,#c6dbf8)"></div><div class="a" style="left:429px;top:510px;width:2px;height:56px;background:#86a8d7"></div><div class="a" style="left:531px;top:510px;width:2px;height:56px;background:#86a8d7"></div><div class="a" style="left:669px;top:510px;width:2px;height:56px;background:#86a8d7"></div><div class="a" style="left:771px;top:510px;width:2px;height:56px;background:#86a8d7"></div><div class="a" style="left:873px;top:510px;width:2px;height:56px;background:#86a8d7"></div><div class="a" style="left:975px;top:510px;width:2px;height:56px;background:#86a8d7"></div><div class="a" style="left:1077px;top:510px;width:2px;height:56px;background:#86a8d7"></div><div class="a" style="left:1179px;top:510px;width:2px;height:56px;background:#86a8d7"></div><div class="a" style="left:1325px;top:510px;width:2px;height:56px;background:#86a8d7"></div><div class="a" style="left:1470px;top:510px;width:2px;height:56px;background:#86a8d7"></div><div class="a" style="left:1572px;top:510px;width:2px;height:56px;background:#86a8d7"></div><div class="a" style="left:1674px;top:510px;width:2px;height:56px;background:#86a8d7"></div><div class="a" style="left:1758px;top:510px;width:2px;height:56px;background:#86a8d7"></div><div class="a" style="left:1824px;top:510px;width:2px;height:56px;background:#86a8d7"></div><div class="a" style="left:1908px;top:510px;width:2px;height:56px;background:#86a8d7"></div><div class="a" style="left:2010px;top:510px;width:2px;height:56px;background:#86a8d7"></div><div class="a" style="left:2140px;top:510px;width:2px;height:56px;background:#86a8d7"></div><div class="t" style="left:362px;top:528px">序号</div><div class="t" style="left:437px;top:528px">产品编码</div><div class="t" style="left:539px;top:528px">工艺路线名称</div><div class="t" style="left:677px;top:528px">工序编码</div><div class="t" style="left:779px;top:528px">工序名称</div><div class="t" style="left:881px;top:528px">工序编号</div><div class="t" style="left:983px;top:528px">指令类型</div><div class="t" style="left:1085px;top:528px">指令编码</div><div class="t" style="left:1187px;top:528px">资源/品目编码</div><div class="t" style="left:1333px;top:528px">资源/品目名称</div><div class="t" style="left:1478px;top:528px">标准人力</div><div class="t" style="left:1580px;top:528px">前工序号</div><div class="t" style="left:1682px;top:528px">前设置</div><div class="t" style="left:1766px;top:528px">制造</div><div class="t" style="left:1832px;top:528px">后设置</div><div class="t" style="left:1916px;top:528px">接续方法</div><div class="t" style="left:2018px;top:528px">间隔时间Min</div><div class="a" style="left:354px;top:568px;width:76px;height:49px;border-left:2px solid #86a8d7;border-right:2px solid #86a8d7;background:linear-gradient(#fbfdff,#c9dcf8)"></div><svg class="a" style="left:359px;top:584px" width="13" height="15" viewBox="0 0 13 15"><path d="M1.5 1.5h10v3l-3.2 3.5v5.5h-3.6v-5.5L1.5 4.5z" fill="none" stroke="#74a3e6" stroke-width="1.5"/><path d="M1.5 4.5h10" stroke="#74a3e6" stroke-width="1.2"/></svg><div class="a" style="left:531px;top:568px;width:1px;height:49px;background:#e0ebfa"></div><svg class="a" style="left:437px;top:585px" width="25" height="16" viewBox="0 0 25 16"><rect x="6.5" y="0" width="10.5" height="16" rx="1" fill="#4db38b"/><rect x="9" y="4" width="5.5" height="8" fill="#e8f6ef"/><circle cx="11.7" cy="6.3" r="0.9" fill="#4db38b"/><circle cx="11.7" cy="9.6" r="0.9" fill="#4db38b"/><text x="0.5" y="12" font-size="9" font-weight="bold" font-family="Liberation Mono" fill="#222">A</text><text x="18" y="12" font-size="9" font-weight="bold" font-family="Liberation Mono" fill="#222">C</text></svg><div class="a" style="left:669px;top:568px;width:1px;height:49px;background:#e0ebfa"></div><svg class="a" style="left:539px;top:585px" width="25" height="16" viewBox="0 0 25 16"><rect x="6.5" y="0" width="10.5" height="16" rx="1" fill="#4db38b"/><rect x="9" y="4" width="5.5" height="8" fill="#e8f6ef"/><circle cx="11.7" cy="6.3" r="0.9" fill="#4db38b"/><circle cx="11.7" cy="9.6" r="0.9" fill="#4db38b"/><text x="0.5" y="12" font-size="9" font-weight="bold" font-family="Liberation Mono" fill="#222">A</text><text x="18" y="12" font-size="9" font-weight="bold" font-family="Liberation Mono" fill="#222">C</text></svg><div class="a" style="left:771px;top:568px;width:1px;height:49px;background:#e0ebfa"></div><svg class="a" style="left:677px;top:585px" width="25" height="16" viewBox="0 0 25 16"><rect x="6.5" y="0" width="10.5" height="16" rx="1" fill="#4db38b"/><rect x="9" y="4" width="5.5" height="8" fill="#e8f6ef"/><circle cx="11.7" cy="6.3" r="0.9" fill="#4db38b"/><circle cx="11.7" cy="9.6" r="0.9" fill="#4db38b"/><text x="0.5" y="12" font-size="9" font-weight="bold" font-family="Liberation Mono" fill="#222">A</text><text x="18" y="12" font-size="9" font-weight="bold" font-family="Liberation Mono" fill="#222">C</text></svg><div class="a" style="left:873px;top:568px;width:1px;height:49px;background:#e0ebfa"></div><svg class="a" style="left:779px;top:585px" width="25" height="16" viewBox="0 0 25 16"><rect x="6.5" y="0" width="10.5" height="16" rx="1" fill="#4db38b"/><rect x="9" y="4" width="5.5" height="8" fill="#e8f6ef"/><circle cx="11.7" cy="6.3" r="0.9" fill="#4db38b"/><circle cx="11.7" cy="9.6" r="0.9" fill="#4db38b"/><text x="0.5" y="12" font-size="9" font-weight="bold" font-family="Liberation Mono" fill="#222">A</text><text x="18" y="12" font-size="9" font-weight="bold" font-family="Liberation Mono" fill="#222">C</text></svg><div class="a" style="left:975px;top:568px;width:1px;height:49px;background:#e0ebfa"></div><div class="a" style="left:886px;top:590px;width:14px;height:6px;border-top:2px solid #111;border-bottom:2px solid #111"></div><div class="a" style="left:1077px;top:568px;width:1px;height:49px;background:#e0ebfa"></div><svg class="a" style="left:983px;top:585px" width="25" height="16" viewBox="0 0 25 16"><rect x="6.5" y="0" width="10.5" height="16" rx="1" fill="#4db38b"/><rect x="9" y="4" width="5.5" height="8" fill="#e8f6ef"/><circle cx="11.7" cy="6.3" r="0.9" fill="#4db38b"/><circle cx="11.7" cy="9.6" r="0.9" fill="#4db38b"/><text x="0.5" y="12" font-size="9" font-weight="bold" font-family="Liberation Mono" fill="#222">A</text><text x="18" y="12" font-size="9" font-weight="bold" font-family="Liberation Mono" fill="#222">C</text></svg><div class="a" style="left:1179px;top:568px;width:1px;height:49px;background:#e0ebfa"></div><svg class="a" style="left:1085px;top:585px" width="25" height="16" viewBox="0 0 25 16"><rect x="6.5" y="0" width="10.5" height="16" rx="1" fill="#4db38b"/><rect x="9" y="4" width="5.5" height="8" fill="#e8f6ef"/><circle cx="11.7" cy="6.3" r="0.9" fill="#4db38b"/><circle cx="11.7" cy="9.6" r="0.9" fill="#4db38b"/><text x="0.5" y="12" font-size="9" font-weight="bold" font-family="Liberation Mono" fill="#222">A</text><text x="18" y="12" font-size="9" font-weight="bold" font-family="Liberation Mono" fill="#222">C</text></svg><div class="a" style="left:1325px;top:568px;width:1px;height:49px;background:#e0ebfa"></div><svg class="a" style="left:1187px;top:585px" width="25" height="16" viewBox="0 0 25 16"><rect x="6.5" y="0" width="10.5" height="16" rx="1" fill="#4db38b"/><rect x="9" y="4" width="5.5" height="8" fill="#e8f6ef"/><circle cx="11.7" cy="6.3" r="0.9" fill="#4db38b"/><circle cx="11.7" cy="9.6" r="0.9" fill="#4db38b"/><text x="0.5" y="12" font-size="9" font-weight="bold" font-family="Liberation Mono" fill="#222">A</text><text x="18" y="12" font-size="9" font-weight="bold" font-family="Liberation Mono" fill="#222">C</text></svg><div class="a" style="left:1470px;top:568px;width:1px;height:49px;background:#e0ebfa"></div><svg class="a" style="left:1333px;top:585px" width="25" height="16" viewBox="0 0 25 16"><rect x="6.5" y="0" width="10.5" height="16" rx="1" fill="#4db38b"/><rect x="9" y="4" width="5.5" height="8" fill="#e8f6ef"/><circle cx="11.7" cy="6.3" r="0.9" fill="#4db38b"/><circle cx="11.7" cy="9.6" r="0.9" fill="#4db38b"/><text x="0.5" y="12" font-size="9" font-weight="bold" font-family="Liberation Mono" fill="#222">A</text><text x="18" y="12" font-size="9" font-weight="bold" font-family="Liberation Mono" fill="#222">C</text></svg><div class="a" style="left:1572px;top:568px;width:1px;height:49px;background:#e0ebfa"></div><div class="a" style="left:1483px;top:590px;width:14px;height:6px;border-top:2px solid #111;border-bottom:2px solid #111"></div><div class="a" style="left:1674px;top:568px;width:1px;height:49px;background:#e0ebfa"></div><svg class="a" style="left:1580px;top:585px" width="25" height="16" viewBox="0 0 25 16"><rect x="6.5" y="0" width="10.5" height="16" rx="1" fill="#4db38b"/><rect x="9" y="4" width="5.5" height="8" fill="#e8f6ef"/><circle cx="11.7" cy="6.3" r="0.9" fill="#4db38b"/><circle cx="11.7" cy="9.6" r="0.9" fill="#4db38b"/><text x="0.5" y="12" font-size="9" font-weight="bold" font-family="Liberation Mono" fill="#222">A</text><text x="18" y="12" font-size="9" font-weight="bold" font-family="Liberation Mono" fill="#222">C</text></svg><div class="a" style="left:1758px;top:568px;width:1px;height:49px;background:#e0ebfa"></div><svg class="a" style="left:1682px;top:585px" width="25" height="16" viewBox="0 0 25 16"><rect x="6.5" y="0" width="10.5" height="16" rx="1" fill="#4db38b"/><rect x="9" y="4" width="5.5" height="8" fill="#e8f6ef"/><circle cx="11.7" cy="6.3" r="0.9" fill="#4db38b"/><circle cx="11.7" cy="9.6" r="0.9" fill="#4db38b"/><text x="0.5" y="12" font-size="9" font-weight="bold" font-family="Liberation Mono" fill="#222">A</text><text x="18" y="12" font-size="9" font-weight="bold" font-family="Liberation Mono" fill="#222">C</text></svg><div class="a" style="left:1824px;top:568px;width:1px;height:49px;background:#e0ebfa"></div><svg class="a" style="left:1766px;top:585px" width="25" height="16" viewBox="0 0 25 16"><rect x="6.5" y="0" width="10.5" height="16" rx="1" fill="#4db38b"/><rect x="9" y="4" width="5.5" height="8" fill="#e8f6ef"/><circle cx="11.7" cy="6.3" r="0.9" fill="#4db38b"/><circle cx="11.7" cy="9.6" r="0.9" fill="#4db38b"/><text x="0.5" y="12" font-size="9" font-weight="bold" font-family="Liberation Mono" fill="#222">A</text><text x="18" y="12" font-size="9" font-weight="bold" font-family="Liberation Mono" fill="#222">C</text></svg><div class="a" style="left:1908px;top:568px;width:1px;height:49px;background:#e0ebfa"></div><svg class="a" style="left:1832px;top:585px" width="25" height="16" viewBox="0 0 25 16"><rect x="6.5" y="0" width="10.5" height="16" rx="1" fill="#4db38b"/><rect x="9" y="4" width="5.5" height="8" fill="#e8f6ef"/><circle cx="11.7" cy="6.3" r="0.9" fill="#4db38b"/><circle cx="11.7" cy="9.6" r="0.9" fill="#4db38b"/><text x="0.5" y="12" font-size="9" font-weight="bold" font-family="Liberation Mono" fill="#222">A</text><text x="18" y="12" font-size="9" font-weight="bold" font-family="Liberation Mono" fill="#222">C</text></svg><div class="a" style="left:2010px;top:568px;width:1px;height:49px;background:#e0ebfa"></div><svg class="a" style="left:1916px;top:585px" width="25" height="16" viewBox="0 0 25 16"><rect x="6.5" y="0" width="10.5" height="16" rx="1" fill="#4db38b"/><rect x="9" y="4" width="5.5" height="8" fill="#e8f6ef"/><circle cx="11.7" cy="6.3" r="0.9" fill="#4db38b"/><circle cx="11.7" cy="9.6" r="0.9" fill="#4db38b"/><text x="0.5" y="12" font-size="9" font-weight="bold" font-family="Liberation Mono" fill="#222">A</text><text x="18" y="12" font-size="9" font-weight="bold" font-family="Liberation Mono" fill="#222">C</text></svg><div class="a" style="left:2140px;top:568px;width:1px;height:49px;background:#e0ebfa"></div><svg class="a" style="left:2018px;top:585px" width="25" height="16" viewBox="0 0 25 16"><rect x="6.5" y="0" width="10.5" height="16" rx="1" fill="#4db38b"/><rect x="9" y="4" width="5.5" height="8" fill="#e8f6ef"/><circle cx="11.7" cy="6.3" r="0.9" fill="#4db38b"/><circle cx="11.7" cy="9.6" r="0.9" fill="#4db38b"/><text x="0.5" y="12" font-size="9" font-weight="bold" font-family="Liberation Mono" fill="#222">A</text><text x="18" y="12" font-size="9" font-weight="bold" font-family="Liberation Mono" fill="#222">C</text></svg><div class="a" style="left:354px;top:616px;width:1789px;height:6px;border-top:2px solid #86a8d7;border-bottom:2px solid #86a8d7;background:#fff"></div><div class="a" style="left:430px;top:622.0px;width:102px;height:594.0px;background:#fff;border-right:1px solid #e0ebfa;border-bottom:1px solid #e0ebfa"></div><div class="t" style="left:437px;top:909.0px;letter-spacing:0.5px">10001</div><div class="a" style="left:532px;top:622.0px;width:138px;height:594.0px;background:#fff;border-right:1px solid #e0ebfa;border-bottom:1px solid #e0ebfa"></div><div class="t" style="left:539px;top:909.0px">零件A</div><div class="a" style="left:354px;top:622.0px;width:76px;height:49.5px;border-left:2px solid #86a8d7;border-right:2px solid #86a8d7;border-bottom:2px solid #86a8d7;background:linear-gradient(#f6f9fe,#dde9fa 50%,#c9dcf6)"></div><div class="t" style="left:375px;top:636.2px">1</div><div class="a" style="left:670px;top:622.0px;width:102px;height:49.5px;background:#f5f9fe;border-right:1px solid #e0ebfa;border-bottom:1px solid #e0ebfa"></div><div class="t" style="left:677px;top:638.2px;letter-spacing:0.5px">10001-10</div><div class="a" style="left:772px;top:622.0px;width:102px;height:49.5px;background:#fff;border-right:1px solid #e0ebfa;border-bottom:1px solid #e0ebfa"></div><div class="t" style="left:779px;top:638.2px">深孔钻</div><div class="a" style="left:874px;top:622.0px;width:102px;height:49.5px;background:#fff;border-right:1px solid #e0ebfa;border-bottom:1px solid #e0ebfa"></div><div class="t" style="left:874px;top:638.2px;width:96px;text-align:right;letter-spacing:0.5px">10</div><div class="a" style="left:976px;top:622.0px;width:102px;height:49.5px;background:#f5f9fe;border-right:1px solid #e0ebfa;border-bottom:1px solid #e0ebfa"></div><div class="t" style="left:983px;top:638.2px">使用指令</div><div class="a" style="left:1078px;top:622.0px;width:102px;height:49.5px;background:#f5f9fe;border-right:1px solid #e0ebfa;border-bottom:1px solid #e0ebfa"></div><div class="t" style="left:1085px;top:638.2px">M</div><div class="a" style="left:1180px;top:622.0px;width:146px;height:49.5px;background:#f5f9fe;border-right:1px solid #e0ebfa;border-bottom:1px solid #e0ebfa"></div><div class="t" style="left:1187px;top:638.2px">ND</div><div class="a" style="left:1326px;top:622.0px;width:145px;height:49.5px;background:#f5f9fe;border-right:1px solid #e0ebfa;border-bottom:1px solid #e0ebfa"></div><div class="t" style="left:1333px;top:638.2px">深孔钻</div><div class="a" style="left:1471px;top:622.0px;width:102px;height:49.5px;background:#f5f9fe;border-right:1px solid #e0ebfa;border-bottom:1px solid #e0ebfa"></div><div class="t" style="left:1471px;top:638.2px;width:96px;text-align:right;letter-spacing:0.5px">1</div><div class="a" style="left:1573px;top:622.0px;width:102px;height:49.5px;background:#f5f9fe;border-right:1px solid #e0ebfa;border-bottom:1px solid #e0ebfa"></div><div class="a" style="left:1675px;top:622.0px;width:84px;height:49.5px;background:#f5f9fe;border-right:1px solid #e0ebfa;border-bottom:1px solid #e0ebfa"></div><div class="t" style="left:1682px;top:638.2px">30m</div><div class="a" style="left:1759px;top:622.0px;width:66px;height:49.5px;background:#f5f9fe;border-right:1px solid #e0ebfa;border-bottom:1px solid #e0ebfa"></div><div class="t" style="left:1766px;top:638.2px">20hp</div><div class="a" style="left:1825px;top:622.0px;width:84px;height:49.5px;background:#f5f9fe;border-right:1px solid #e0ebfa;border-bottom:1px solid #e0ebfa"></div><div class="a" style="left:1909px;top:622.0px;width:102px;height:49.5px;background:#f5f9fe;border-right:1px solid #e0ebfa;border-bottom:1px solid #e0ebfa"></div><div class="t" style="left:1916px;top:638.2px">ES</div><div class="a" style="left:2011px;top:622.0px;width:130px;height:49.5px;background:#f5f9fe;border-right:1px solid #e0ebfa;border-bottom:1px solid #e0ebfa"></div><div class="a" style="left:354px;top:671.5px;width:76px;height:49.5px;border-left:2px solid #86a8d7;border-right:2px solid #86a8d7;border-bottom:2px solid #86a8d7;background:linear-gradient(#f6f9fe,#dde9fa 50%,#c9dcf6)"></div><div class="t" style="left:364px;top:685.8px">2</div><div class="a" style="left:670px;top:671.5px;width:102px;height:49.5px;background:#f5f9fe;border-right:1px solid #e0ebfa;border-bottom:1px solid #e0ebfa"></div><div class="t" style="left:677px;top:687.8px;letter-spacing:0.5px">10001-20</div><div class="a" style="left:772px;top:671.5px;width:102px;height:49.5px;background:#f5f9fe;border-right:1px solid #e0ebfa;border-bottom:1px solid #e0ebfa"></div><div class="t" style="left:779px;top:687.8px">钻床</div><div class="a" style="left:874px;top:671.5px;width:102px;height:49.5px;background:#f5f9fe;border-right:1px solid #e0ebfa;border-bottom:1px solid #e0ebfa"></div><div class="t" style="left:874px;top:687.8px;width:96px;text-align:right;letter-spacing:0.5px">20</div><div class="a" style="left:976px;top:671.5px;width:102px;height:49.5px;background:#f5f9fe;border-right:1px solid #e0ebfa;border-bottom:1px solid #e0ebfa"></div><div class="t" style="left:983px;top:687.8px">使用指令</div><div class="a" style="left:1078px;top:671.5px;width:102px;height:49.5px;background:#f5f9fe;border-right:1px solid #e0ebfa;border-bottom:1px solid #e0ebfa"></div><div class="t" style="left:1085px;top:687.8px">M</div><div class="a" style="left:1180px;top:671.5px;width:146px;height:49.5px;background:#f5f9fe;border-right:1px solid #e0ebfa;border-bottom:1px solid #e0ebfa"></div><div class="t" style="left:1187px;top:687.8px">DR</div><div class="a" style="left:1326px;top:671.5px;width:145px;height:49.5px;background:#f5f9fe;border-right:1px solid #e0ebfa;border-bottom:1px solid #e0ebfa"></div><div class="t" style="left:1333px;top:687.8px">钻床</div><div class="a" style="left:1471px;top:671.5px;width:102px;height:49.5px;background:#f5f9fe;border-right:1px solid #e0ebfa;border-bottom:1px solid #e0ebfa"></div><div class="t" style="left:1471px;top:687.8px;width:96px;text-align:right;letter-spacing:0.5px">1</div><div class="a" style="left:1573px;top:671.5px;width:102px;height:49.5px;background:#f5f9fe;border-right:1px solid #e0ebfa;border-bottom:1px solid #e0ebfa"></div><div class="a" style="left:1675px;top:671.5px;width:84px;height:49.5px;background:#f5f9fe;border-right:1px solid #e0ebfa;border-bottom:1px solid #e0ebfa"></div><div class="t" style="left:1682px;top:687.8px">15m</div><div class="a" style="left:1759px;top:671.5px;width:66px;height:49.5px;background:#f5f9fe;border-right:1px solid #e0ebfa;border-bottom:1px solid #e0ebfa"></div><div class="t" style="left:1766px;top:687.8px">6hp</div><div class="a" style="left:1825px;top:671.5px;width:84px;height:49.5px;background:#f5f9fe;border-right:1px solid #e0ebfa;border-bottom:1px solid #e0ebfa"></div><div class="a" style="left:1909px;top:671.5px;width:102px;height:49.5px;background:#f5f9fe;border-right:1px solid #e0ebfa;border-bottom:1px solid #e0ebfa"></div><div class="t" style="left:1916px;top:687.8px">ES</div><div class="a" style="left:2011px;top:671.5px;width:130px;height:49.5px;background:#f5f9fe;border-right:1px solid #e0ebfa;border-bottom:1px solid #e0ebfa"></div><div class="a" style="left:354px;top:721.0px;width:76px;height:49.5px;border-left:2px solid #86a8d7;border-right:2px solid #86a8d7;border-bottom:2px solid #86a8d7;background:linear-gradient(#f6f9fe,#dde9fa 50%,#c9dcf6)"></div><div class="t" style="left:364px;top:735.2px">3</div><div class="a" style="left:670px;top:721.0px;width:102px;height:49.5px;background:#f5f9fe;border-right:1px solid #e0ebfa;border-bottom:1px solid #e0ebfa"></div><div class="t" style="left:677px;top:737.2px;letter-spacing:0.5px">10001-30</div><div class="a" style="left:772px;top:721.0px;width:102px;height:49.5px;background:#fff;border-right:1px solid #e0ebfa;border-bottom:1px solid #e0ebfa"></div><div class="t" style="left:779px;top:737.2px">NC粗加工</div><div class="a" style="left:874px;top:721.0px;width:102px;height:49.5px;background:#fff;border-right:1px solid #e0ebfa;border-bottom:1px solid #e0ebfa"></div><div class="t" style="left:874px;top:737.2px;width:96px;text-align:right;letter-spacing:0.5px">30</div><div class="a" style="left:976px;top:721.0px;width:102px;height:49.5px;background:#f5f9fe;border-right:1px solid #e0ebfa;border-bottom:1px solid #e0ebfa"></div><div class="t" style="left:983px;top:737.2px">使用指令</div><div class="a" style="left:1078px;top:721.0px;width:102px;height:49.5px;background:#f5f9fe;border-right:1px solid #e0ebfa;border-bottom:1px solid #e0ebfa"></div><div class="t" style="left:1085px;top:737.2px">M</div><div class="a" style="left:1180px;top:721.0px;width:146px;height:49.5px;background:#f5f9fe;border-right:1px solid #e0ebfa;border-bottom:1px solid #e0ebfa"></div><div class="t" style="left:1187px;top:737.2px">NR</div><div class="a" style="left:1326px;top:721.0px;width:145px;height:49.5px;background:#f5f9fe;border-right:1px solid #e0ebfa;border-bottom:1px solid #e0ebfa"></div><div class="t" style="left:1333px;top:737.2px">NC粗加工</div><div class="a" style="left:1471px;top:721.0px;width:102px;height:49.5px;background:#f5f9fe;border-right:1px solid #e0ebfa;border-bottom:1px solid #e0ebfa"></div><div class="t" style="left:1471px;top:737.2px;width:96px;text-align:right;letter-spacing:0.5px">1</div><div class="a" style="left:1573px;top:721.0px;width:102px;height:49.5px;background:#f5f9fe;border-right:1px solid #e0ebfa;border-bottom:1px solid #e0ebfa"></div><div class="a" style="left:1675px;top:721.0px;width:84px;height:49.5px;background:#f5f9fe;border-right:1px solid #e0ebfa;border-bottom:1px solid #e0ebfa"></div><div class="t" style="left:1682px;top:737.2px">20m</div><div class="a" style="left:1759px;top:721.0px;width:66px;height:49.5px;background:#f5f9fe;border-right:1px solid #e0ebfa;border-bottom:1px solid #e0ebfa"></div><div class="t" style="left:1766px;top:737.2px">30hp</div><div class="a" style="left:1825px;top:721.0px;width:84px;height:49.5px;background:#f5f9fe;border-right:1px solid #e0ebfa;border-bottom:1px solid #e0ebfa"></div><div class="a" style="left:1909px;top:721.0px;width:102px;height:49.5px;background:#f5f9fe;border-right:1px solid #e0ebfa;border-bottom:1px solid #e0ebfa"></div><div class="t" style="left:1916px;top:737.2px">ES</div><div class="a" style="left:2011px;top:721.0px;width:130px;height:49.5px;background:#f5f9fe;border-right:1px solid #e0ebfa;border-bottom:1px solid #e0ebfa"></div><div class="a" style="left:354px;top:770.5px;width:76px;height:49.5px;border-left:2px solid #86a8d7;border-right:2px solid #86a8d7;border-bottom:2px solid #86a8d7;background:linear-gradient(#f6f9fe,#dde9fa 50%,#c9dcf6)"></div><div class="t" style="left:364px;top:784.8px">4</div><div class="a" style="left:670px;top:770.5px;width:102px;height:49.5px;background:#f5f9fe;border-right:1px solid #e0ebfa;border-bottom:1px solid #e0ebfa"></div><div class="t" style="left:677px;top:786.8px;letter-spacing:0.5px">10001-40</div><div class="a" style="left:772px;top:770.5px;width:102px;height:49.5px;background:#f5f9fe;border-right:1px solid #e0ebfa;border-bottom:1px solid #e0ebfa"></div><div class="t" style="left:779px;top:786.8px">钻床</div><div class="a" style="left:874px;top:770.5px;width:102px;height:49.5px;background:#f5f9fe;border-right:1px solid #e0ebfa;border-bottom:1px solid #e0ebfa"></div><div class="t" style="left:874px;top:786.8px;width:96px;text-align:right;letter-spacing:0.5px">40</div><div class="a" style="left:976px;top:770.5px;width:102px;height:49.5px;background:#f5f9fe;border-right:1px solid #e0ebfa;border-bottom:1px solid #e0ebfa"></div><div class="t" style="left:983px;top:786.8px">使用指令</div><div class="a" style="left:1078px;top:770.5px;width:102px;height:49.5px;background:#f5f9fe;border-right:1px solid #e0ebfa;border-bottom:1px solid #e0ebfa"></div><div class="t" style="left:1085px;top:786.8px">M</div><div class="a" style="left:1180px;top:770.5px;width:146px;height:49.5px;background:#f5f9fe;border-right:1px solid #e0ebfa;border-bottom:1px solid #e0ebfa"></div><div class="t" style="left:1187px;top:786.8px">DR</div><div class="a" style="left:1326px;top:770.5px;width:145px;height:49.5px;background:#f5f9fe;border-right:1px solid #e0ebfa;border-bottom:1px solid #e0ebfa"></div><div class="t" style="left:1333px;top:786.8px">钻床</div><div class="a" style="left:1471px;top:770.5px;width:102px;height:49.5px;background:#f5f9fe;border-right:1px solid #e0ebfa;border-bottom:1px solid #e0ebfa"></div><div class="t" style="left:1471px;top:786.8px;width:96px;text-align:right;letter-spacing:0.5px">1</div><div class="a" style="left:1573px;top:770.5px;width:102px;height:49.5px;background:#f5f9fe;border-right:1px solid #e0ebfa;border-bottom:1px solid #e0ebfa"></div><div class="a" style="left:1675px;top:770.5px;width:84px;height:49.5px;background:#f5f9fe;border-right:1px solid #e0ebfa;border-bottom:1px solid #e0ebfa"></div><div class="t" style="left:1682px;top:786.8px">10m</div><div class="a" style="left:1759px;top:770.5px;width:66px;height:49.5px;background:#f5f9fe;border-right:1px solid #e0ebfa;border-bottom:1px solid #e0ebfa"></div><div class="t" style="left:1766px;top:786.8px">2hp</div><div class="a" style="left:1825px;top:770.5px;width:84px;height:49.5px;background:#f5f9fe;border-right:1px solid #e0ebfa;border-bottom:1px solid #e0ebfa"></div><div class="a" style="left:1909px;top:770.5px;width:102px;height:49.5px;background:#f5f9fe;border-right:1px solid #e0ebfa;border-bottom:1px solid #e0ebfa"></div><div class="t" style="left:1916px;top:786.8px">ES</div><div class="a" style="left:2011px;top:770.5px;width:130px;height:49.5px;background:#f5f9fe;border-right:1px solid #e0ebfa;border-bottom:1px solid #e0ebfa"></div><div class="a" style="left:354px;top:820.0px;width:76px;height:49.5px;border-left:2px solid #86a8d7;border-right:2px solid #86a8d7;border-bottom:2px solid #86a8d7;background:linear-gradient(#f6f9fe,#dde9fa 50%,#c9dcf6)"></div><div class="t" style="left:364px;top:834.2px">5</div><div class="a" style="left:670px;top:820.0px;width:102px;height:49.5px;background:#f5f9fe;border-right:1px solid #e0ebfa;border-bottom:1px solid #e0ebfa"></div><div class="t" style="left:677px;top:836.2px;letter-spacing:0.5px">10001-50</div><div class="a" style="left:772px;top:820.0px;width:102px;height:49.5px;background:#fff;border-right:1px solid #e0ebfa;border-bottom:1px solid #e0ebfa"></div><div class="t" style="left:779px;top:836.2px">热处理</div><div class="a" style="left:874px;top:820.0px;width:102px;height:49.5px;background:#fff;border-right:1px solid #e0ebfa;border-bottom:1px solid #e0ebfa"></div><div class="t" style="left:874px;top:836.2px;width:96px;text-align:right;letter-spacing:0.5px">50</div><div class="a" style="left:976px;top:820.0px;width:102px;height:49.5px;background:#f5f9fe;border-right:1px solid #e0ebfa;border-bottom:1px solid #e0ebfa"></div><div class="t" style="left:983px;top:836.2px">使用指令</div><div class="a" style="left:1078px;top:820.0px;width:102px;height:49.5px;background:#f5f9fe;border-right:1px solid #e0ebfa;border-bottom:1px solid #e0ebfa"></div><div class="t" style="left:1085px;top:836.2px">M</div><div class="a" style="left:1180px;top:820.0px;width:146px;height:49.5px;background:#f5f9fe;border-right:1px solid #e0ebfa;border-bottom:1px solid #e0ebfa"></div><div class="t" style="left:1187px;top:836.2px">HS</div><div class="a" style="left:1326px;top:820.0px;width:145px;height:49.5px;background:#f5f9fe;border-right:1px solid #e0ebfa;border-bottom:1px solid #e0ebfa"></div><div class="t" style="left:1333px;top:836.2px">热处理</div><div class="a" style="left:1471px;top:820.0px;width:102px;height:49.5px;background:#f5f9fe;border-right:1px solid #e0ebfa;border-bottom:1px solid #e0ebfa"></div><div class="t" style="left:1471px;top:836.2px;width:96px;text-align:right;letter-spacing:0.5px">1</div><div class="a" style="left:1573px;top:820.0px;width:102px;height:49.5px;background:#f5f9fe;border-right:1px solid #e0ebfa;border-bottom:1px solid #e0ebfa"></div><div class="a" style="left:1675px;top:820.0px;width:84px;height:49.5px;background:#f5f9fe;border-right:1px solid #e0ebfa;border-bottom:1px solid #e0ebfa"></div><div class="t" style="left:1682px;top:836.2px">15m</div><div class="a" style="left:1759px;top:820.0px;width:66px;height:49.5px;background:#f5f9fe;border-right:1px solid #e0ebfa;border-bottom:1px solid #e0ebfa"></div><div class="t" style="left:1766px;top:836.2px">1hp</div><div class="a" style="left:1825px;top:820.0px;width:84px;height:49.5px;background:#f5f9fe;border-right:1px solid #e0ebfa;border-bottom:1px solid #e0ebfa"></div><div class="a" style="left:1909px;top:820.0px;width:102px;height:49.5px;background:#f5f9fe;border-right:1px solid #e0ebfa;border-bottom:1px solid #e0ebfa"></div><div class="t" style="left:1916px;top:836.2px">ES</div><div class="a" style="left:2011px;top:820.0px;width:130px;height:49.5px;background:#f5f9fe;border-right:1px solid #e0ebfa;border-bottom:1px solid #e0ebfa"></div><div class="a" style="left:354px;top:869.5px;width:76px;height:49.5px;border-left:2px solid #86a8d7;border-right:2px solid #86a8d7;border-bottom:2px solid #86a8d7;background:linear-gradient(#f6f9fe,#dde9fa 50%,#c9dcf6)"></div><div class="t" style="left:364px;top:883.8px">6</div><div class="a" style="left:670px;top:869.5px;width:102px;height:49.5px;background:#f5f9fe;border-right:1px solid #e0ebfa;border-bottom:1px solid #e0ebfa"></div><div class="t" style="left:677px;top:885.8px;letter-spacing:0.5px">10001-60</div><div class="a" style="left:772px;top:869.5px;width:102px;height:49.5px;background:#f5f9fe;border-right:1px solid #e0ebfa;border-bottom:1px solid #e0ebfa"></div><div class="t" style="left:779px;top:885.8px">质检</div><div class="a" style="left:874px;top:869.5px;width:102px;height:49.5px;background:#f5f9fe;border-right:1px solid #e0ebfa;border-bottom:1px solid #e0ebfa"></div><div class="t" style="left:874px;top:885.8px;width:96px;text-align:right;letter-spacing:0.5px">60</div><div class="a" style="left:976px;top:869.5px;width:102px;height:49.5px;background:#f5f9fe;border-right:1px solid #e0ebfa;border-bottom:1px solid #e0ebfa"></div><div class="t" style="left:983px;top:885.8px">使用指令</div><div class="a" style="left:1078px;top:869.5px;width:102px;height:49.5px;background:#f5f9fe;border-right:1px solid #e0ebfa;border-bottom:1px solid #e0ebfa"></div><div class="t" style="left:1085px;top:885.8px">M</div><div class="a" style="left:1180px;top:869.5px;width:146px;height:49.5px;background:#f5f9fe;border-right:1px solid #e0ebfa;border-bottom:1px solid #e0ebfa"></div><div class="t" style="left:1187px;top:885.8px">QC</div><div class="a" style="left:1326px;top:869.5px;width:145px;height:49.5px;background:#f5f9fe;border-right:1px solid #e0ebfa;border-bottom:1px solid #e0ebfa"></div><div class="t" style="left:1333px;top:885.8px">质检</div><div class="a" style="left:1471px;top:869.5px;width:102px;height:49.5px;background:#f5f9fe;border-right:1px solid #e0ebfa;border-bottom:1px solid #e0ebfa"></div><div class="t" style="left:1471px;top:885.8px;width:96px;text-align:right;letter-spacing:0.5px">1</div><div class="a" style="left:1573px;top:869.5px;width:102px;height:49.5px;background:#f5f9fe;border-right:1px solid #e0ebfa;border-bottom:1px solid #e0ebfa"></div><div class="a" style="left:1675px;top:869.5px;width:84px;height:49.5px;background:#f5f9fe;border-right:1px solid #e0ebfa;border-bottom:1px solid #e0ebfa"></div><div class="t" style="left:1682px;top:885.8px">20m</div><div class="a" style="left:1759px;top:869.5px;width:66px;height:49.5px;background:#f5f9fe;border-right:1px solid #e0ebfa;border-bottom:1px solid #e0ebfa"></div><div class="t" style="left:1766px;top:885.8px">1hp</div><div class="a" style="left:1825px;top:869.5px;width:84px;height:49.5px;background:#f5f9fe;border-right:1px solid #e0ebfa;border-bottom:1px solid #e0ebfa"></div><div class="a" style="left:1909px;top:869.5px;width:102px;height:49.5px;background:#f5f9fe;border-right:1px solid #e0ebfa;border-bottom:1px solid #e0ebfa"></div><div class="t" style="left:1916px;top:885.8px">ES</div><div class="a" style="left:2011px;top:869.5px;width:130px;height:49.5px;background:#f5f9fe;border-right:1px solid #e0ebfa;border-bottom:1px solid #e0ebfa"></div><div class="a" style="left:354px;top:919.0px;width:76px;height:49.5px;border-left:2px solid #86a8d7;border-right:2px solid #86a8d7;border-bottom:2px solid #86a8d7;background:linear-gradient(#f6f9fe,#dde9fa 50%,#c9dcf6)"></div><div class="t" style="left:364px;top:933.2px">7</div><div class="a" style="left:670px;top:919.0px;width:102px;height:49.5px;background:#f5f9fe;border-right:1px solid #e0ebfa;border-bottom:1px solid #e0ebfa"></div><div class="t" style="left:677px;top:935.2px;letter-spacing:0.5px">10001-70</div><div class="a" style="left:772px;top:919.0px;width:102px;height:49.5px;background:#fff;border-right:1px solid #e0ebfa;border-bottom:1px solid #e0ebfa"></div><div class="t" style="left:779px;top:935.2px">磨床</div><div class="a" style="left:874px;top:919.0px;width:102px;height:49.5px;background:#fff;border-right:1px solid #e0ebfa;border-bottom:1px solid #e0ebfa"></div><div class="t" style="left:874px;top:935.2px;width:96px;text-align:right;letter-spacing:0.5px">70</div><div class="a" style="left:976px;top:919.0px;width:102px;height:49.5px;background:#f5f9fe;border-right:1px solid #e0ebfa;border-bottom:1px solid #e0ebfa"></div><div class="t" style="left:983px;top:935.2px">使用指令</div><div class="a" style="left:1078px;top:919.0px;width:102px;height:49.5px;background:#f5f9fe;border-right:1px solid #e0ebfa;border-bottom:1px solid #e0ebfa"></div><div class="t" style="left:1085px;top:935.2px">M</div><div class="a" style="left:1180px;top:919.0px;width:146px;height:49.5px;background:#f5f9fe;border-right:1px solid #e0ebfa;border-bottom:1px solid #e0ebfa"></div><div class="t" style="left:1187px;top:935.2px">GR</div><div class="a" style="left:1326px;top:919.0px;width:145px;height:49.5px;background:#f5f9fe;border-right:1px solid #e0ebfa;border-bottom:1px solid #e0ebfa"></div><div class="t" style="left:1333px;top:935.2px">磨床</div><div class="a" style="left:1471px;top:919.0px;width:102px;height:49.5px;background:#f5f9fe;border-right:1px solid #e0ebfa;border-bottom:1px solid #e0ebfa"></div><div class="t" style="left:1471px;top:935.2px;width:96px;text-align:right;letter-spacing:0.5px">1</div><div class="a" style="left:1573px;top:919.0px;width:102px;height:49.5px;background:#f5f9fe;border-right:1px solid #e0ebfa;border-bottom:1px solid #e0ebfa"></div><div class="a" style="left:1675px;top:919.0px;width:84px;height:49.5px;background:#f5f9fe;border-right:1px solid #e0ebfa;border-bottom:1px solid #e0ebfa"></div><div class="t" style="left:1682px;top:935.2px">30m</div><div class="a" style="left:1759px;top:919.0px;width:66px;height:49.5px;background:#f5f9fe;border-right:1px solid #e0ebfa;border-bottom:1px solid #e0ebfa"></div><div class="t" style="left:1766px;top:935.2px">9hp</div><div class="a" style="left:1825px;top:919.0px;width:84px;height:49.5px;background:#f5f9fe;border-right:1px solid #e0ebfa;border-bottom:1px solid #e0ebfa"></div><div class="a" style="left:1909px;top:919.0px;width:102px;height:49.5px;background:#f5f9fe;border-right:1px solid #e0ebfa;border-bottom:1px solid #e0ebfa"></div><div class="t" style="left:1916px;top:935.2px">ES</div><div class="a" style="left:2011px;top:919.0px;width:130px;height:49.5px;background:#f5f9fe;border-right:1px solid #e0ebfa;border-bottom:1px solid #e0ebfa"></div><div class="a" style="left:354px;top:968.5px;width:76px;height:49.5px;border-left:2px solid #86a8d7;border-right:2px solid #86a8d7;border-bottom:2px solid #86a8d7;background:linear-gradient(#f6f9fe,#dde9fa 50%,#c9dcf6)"></div><div class="t" style="left:364px;top:982.8px">8</div><div class="a" style="left:670px;top:968.5px;width:102px;height:49.5px;background:#f5f9fe;border-right:1px solid #e0ebfa;border-bottom:1px solid #e0ebfa"></div><div class="t" style="left:677px;top:984.8px;letter-spacing:0.5px">10001-80</div><div class="a" style="left:772px;top:968.5px;width:102px;height:49.5px;background:#f5f9fe;border-right:1px solid #e0ebfa;border-bottom:1px solid #e0ebfa"></div><div class="t" style="left:779px;top:984.8px">NC精加工</div><div class="a" style="left:874px;top:968.5px;width:102px;height:49.5px;background:#f5f9fe;border-right:1px solid #e0ebfa;border-bottom:1px solid #e0ebfa"></div><div class="t" style="left:874px;top:984.8px;width:96px;text-align:right;letter-spacing:0.5px">80</div><div class="a" style="left:976px;top:968.5px;width:102px;height:49.5px;background:#f5f9fe;border-right:1px solid #e0ebfa;border-bottom:1px solid #e0ebfa"></div><div class="t" style="left:983px;top:984.8px">使用指令</div><div class="a" style="left:1078px;top:968.5px;width:102px;height:49.5px;background:#f5f9fe;border-right:1px solid #e0ebfa;border-bottom:1px solid #e0ebfa"></div><div class="t" style="left:1085px;top:984.8px">M</div><div class="a" style="left:1180px;top:968.5px;width:146px;height:49.5px;background:#f5f9fe;border-right:1px solid #e0ebfa;border-bottom:1px solid #e0ebfa"></div><div class="t" style="left:1187px;top:984.8px">NF</div><div class="a" style="left:1326px;top:968.5px;width:145px;height:49.5px;background:#f5f9fe;border-right:1px solid #e0ebfa;border-bottom:1px solid #e0ebfa"></div><div class="t" style="left:1333px;top:984.8px">NC精加工</div><div class="a" style="left:1471px;top:968.5px;width:102px;height:49.5px;background:#f5f9fe;border-right:1px solid #e0ebfa;border-bottom:1px solid #e0ebfa"></div><div class="t" style="left:1471px;top:984.8px;width:96px;text-align:right;letter-spacing:0.5px">1</div><div class="a" style="left:1573px;top:968.5px;width:102px;height:49.5px;background:#f5f9fe;border-right:1px solid #e0ebfa;border-bottom:1px solid #e0ebfa"></div><div class="a" style="left:1675px;top:968.5px;width:84px;height:49.5px;background:#f5f9fe;border-right:1px solid #e0ebfa;border-bottom:1px solid #e0ebfa"></div><div class="t" style="left:1682px;top:984.8px">15m</div><div class="a" style="left:1759px;top:968.5px;width:66px;height:49.5px;background:#f5f9fe;border-right:1px solid #e0ebfa;border-bottom:1px solid #e0ebfa"></div><div class="t" style="left:1766px;top:984.8px">30hp</div><div class="a" style="left:1825px;top:968.5px;width:84px;height:49.5px;background:#f5f9fe;border-right:1px solid #e0ebfa;border-bottom:1px solid #e0ebfa"></div><div class="a" style="left:1909px;top:968.5px;width:102px;height:49.5px;background:#f5f9fe;border-right:1px solid #e0ebfa;border-bottom:1px solid #e0ebfa"></div><div class="t" style="left:1916px;top:984.8px">ES</div><div class="a" style="left:2011px;top:968.5px;width:130px;height:49.5px;background:#f5f9fe;border-right:1px solid #e0ebfa;border-bottom:1px solid #e0ebfa"></div><div class="a" style="left:354px;top:1018.0px;width:76px;height:49.5px;border-left:2px solid #86a8d7;border-right:2px solid #86a8d7;border-bottom:2px solid #86a8d7;background:linear-gradient(#f6f9fe,#dde9fa 50%,#c9dcf6)"></div><div class="t" style="left:364px;top:1032.2px">9</div><div class="a" style="left:670px;top:1018.0px;width:102px;height:49.5px;background:#f5f9fe;border-right:1px solid #e0ebfa;border-bottom:1px solid #e0ebfa"></div><div class="t" style="left:677px;top:1034.2px;letter-spacing:0.5px">10001-90</div><div class="a" style="left:772px;top:1018.0px;width:102px;height:49.5px;background:#fff;border-right:1px solid #e0ebfa;border-bottom:1px solid #e0ebfa"></div><div class="t" style="left:779px;top:1034.2px">火花机</div><div class="a" style="left:874px;top:1018.0px;width:102px;height:49.5px;background:#fff;border-right:1px solid #e0ebfa;border-bottom:1px solid #e0ebfa"></div><div class="t" style="left:874px;top:1034.2px;width:96px;text-align:right;letter-spacing:0.5px">90</div><div class="a" style="left:976px;top:1018.0px;width:102px;height:49.5px;background:#f5f9fe;border-right:1px solid #e0ebfa;border-bottom:1px solid #e0ebfa"></div><div class="t" style="left:983px;top:1034.2px">使用指令</div><div class="a" style="left:1078px;top:1018.0px;width:102px;height:49.5px;background:#f5f9fe;border-right:1px solid #e0ebfa;border-bottom:1px solid #e0ebfa"></div><div class="t" style="left:1085px;top:1034.2px">M</div><div class="a" style="left:1180px;top:1018.0px;width:146px;height:49.5px;background:#f5f9fe;border-right:1px solid #e0ebfa;border-bottom:1px solid #e0ebfa"></div><div class="t" style="left:1187px;top:1034.2px">EM</div><div class="a" style="left:1326px;top:1018.0px;width:145px;height:49.5px;background:#f5f9fe;border-right:1px solid #e0ebfa;border-bottom:1px solid #e0ebfa"></div><div class="t" style="left:1333px;top:1034.2px">火花机</div><div class="a" style="left:1471px;top:1018.0px;width:102px;height:49.5px;background:#f5f9fe;border-right:1px solid #e0ebfa;border-bottom:1px solid #e0ebfa"></div><div class="t" style="left:1471px;top:1034.2px;width:96px;text-align:right;letter-spacing:0.5px">1</div><div class="a" style="left:1573px;top:1018.0px;width:102px;height:49.5px;background:#f5f9fe;border-right:1px solid #e0ebfa;border-bottom:1px solid #e0ebfa"></div><div class="a" style="left:1675px;top:1018.0px;width:84px;height:49.5px;background:#f5f9fe;border-right:1px solid #e0ebfa;border-bottom:1px solid #e0ebfa"></div><div class="t" style="left:1682px;top:1034.2px">20m</div><div class="a" style="left:1759px;top:1018.0px;width:66px;height:49.5px;background:#f5f9fe;border-right:1px solid #e0ebfa;border-bottom:1px solid #e0ebfa"></div><div class="t" style="left:1766px;top:1034.2px">30hp</div><div class="a" style="left:1825px;top:1018.0px;width:84px;height:49.5px;background:#f5f9fe;border-right:1px solid #e0ebfa;border-bottom:1px solid #e0ebfa"></div><div class="a" style="left:1909px;top:1018.0px;width:102px;height:49.5px;background:#f5f9fe;border-right:1px solid #e0ebfa;border-bottom:1px solid #e0ebfa"></div><div class="t" style="left:1916px;top:1034.2px">ES</div><div class="a" style="left:2011px;top:1018.0px;width:130px;height:49.5px;background:#f5f9fe;border-right:1px solid #e0ebfa;border-bottom:1px solid #e0ebfa"></div><div class="a" style="left:354px;top:1067.5px;width:76px;height:49.5px;border-left:2px solid #86a8d7;border-right:2px solid #86a8d7;border-bottom:2px solid #86a8d7;background:linear-gradient(#f6f9fe,#dde9fa 50%,#c9dcf6)"></div><div class="t" style="left:364px;top:1081.8px">10</div><div class="a" style="left:670px;top:1067.5px;width:102px;height:49.5px;background:#f5f9fe;border-right:1px solid #e0ebfa;border-bottom:1px solid #e0ebfa"></div><div class="t" style="left:677px;top:1083.8px;letter-spacing:0.5px">10001-100</div><div class="a" style="left:772px;top:1067.5px;width:102px;height:49.5px;background:#f5f9fe;border-right:1px solid #e0ebfa;border-bottom:1px solid #e0ebfa"></div><div class="t" style="left:779px;top:1083.8px">质检</div><div class="a" style="left:874px;top:1067.5px;width:102px;height:49.5px;background:#f5f9fe;border-right:1px solid #e0ebfa;border-bottom:1px solid #e0ebfa"></div><div class="t" style="left:874px;top:1083.8px;width:96px;text-align:right;letter-spacing:0.5px">100</div><div class="a" style="left:976px;top:1067.5px;width:102px;height:49.5px;background:#f5f9fe;border-right:1px solid #e0ebfa;border-bottom:1px solid #e0ebfa"></div><div class="t" style="left:983px;top:1083.8px">使用指令</div><div class="a" style="left:1078px;top:1067.5px;width:102px;height:49.5px;background:#f5f9fe;border-right:1px solid #e0ebfa;border-bottom:1px solid #e0ebfa"></div><div class="t" style="left:1085px;top:1083.8px">M</div><div class="a" style="left:1180px;top:1067.5px;width:146px;height:49.5px;background:#f5f9fe;border-right:1px solid #e0ebfa;border-bottom:1px solid #e0ebfa"></div><div class="t" style="left:1187px;top:1083.8px">QC</div><div class="a" style="left:1326px;top:1067.5px;width:145px;height:49.5px;background:#f5f9fe;border-right:1px solid #e0ebfa;border-bottom:1px solid #e0ebfa"></div><div class="t" style="left:1333px;top:1083.8px">质检</div><div class="a" style="left:1471px;top:1067.5px;width:102px;height:49.5px;background:#f5f9fe;border-right:1px solid #e0ebfa;border-bottom:1px solid #e0ebfa"></div><div class="t" style="left:1471px;top:1083.8px;width:96px;text-align:right;letter-spacing:0.5px">1</div><div class="a" style="left:1573px;top:1067.5px;width:102px;height:49.5px;background:#f5f9fe;border-right:1px solid #e0ebfa;border-bottom:1px solid #e0ebfa"></div><div class="a" style="left:1675px;top:1067.5px;width:84px;height:49.5px;background:#f5f9fe;border-right:1px solid #e0ebfa;border-bottom:1px solid #e0ebfa"></div><div class="t" style="left:1682px;top:1083.8px">10m</div><div class="a" style="left:1759px;top:1067.5px;width:66px;height:49.5px;background:#f5f9fe;border-right:1px solid #e0ebfa;border-bottom:1px solid #e0ebfa"></div><div class="t" style="left:1766px;top:1083.8px">1hp</div><div class="a" style="left:1825px;top:1067.5px;width:84px;height:49.5px;background:#f5f9fe;border-right:1px solid #e0ebfa;border-bottom:1px solid #e0ebfa"></div><div class="a" style="left:1909px;top:1067.5px;width:102px;height:49.5px;background:#f5f9fe;border-right:1px solid #e0ebfa;border-bottom:1px solid #e0ebfa"></div><div class="t" style="left:1916px;top:1083.8px">ES</div><div class="a" style="left:2011px;top:1067.5px;width:130px;height:49.5px;background:#f5f9fe;border-right:1px solid #e0ebfa;border-bottom:1px solid #e0ebfa"></div><div class="a" style="left:354px;top:1117.0px;width:76px;height:49.5px;border-left:2px solid #86a8d7;border-right:2px solid #86a8d7;border-bottom:2px solid #86a8d7;background:linear-gradient(#f6f9fe,#dde9fa 50%,#c9dcf6)"></div><div class="t" style="left:364px;top:1131.2px">11</div><div class="a" style="left:670px;top:1117.0px;width:102px;height:99.0px;background:#f5f9fe;border-right:1px solid #e0ebfa;border-bottom:1px solid #e0ebfa"></div><div class="t" style="left:677px;top:1157.0px;letter-spacing:0.5px">10001-110</div><div class="a" style="left:772px;top:1117.0px;width:102px;height:99.0px;background:#fff;border-right:1px solid #e0ebfa;border-bottom:1px solid #e0ebfa"></div><div class="t" style="left:779px;top:1157.0px">抛光</div><div class="a" style="left:874px;top:1117.0px;width:102px;height:99.0px;background:#fff;border-right:1px solid #e0ebfa;border-bottom:1px solid #e0ebfa"></div><div class="t" style="left:874px;top:1157.0px;width:96px;text-align:right;letter-spacing:0.5px">110</div><div class="a" style="left:976px;top:1117.0px;width:102px;height:49.5px;background:#f5f9fe;border-right:1px solid #e0ebfa;border-bottom:1px solid #e0ebfa"></div><div class="t" style="left:983px;top:1133.2px">使用指令</div><div class="a" style="left:1078px;top:1117.0px;width:102px;height:49.5px;background:#f5f9fe;border-right:1px solid #e0ebfa;border-bottom:1px solid #e0ebfa"></div><div class="t" style="left:1085px;top:1133.2px">M</div><div class="a" style="left:1180px;top:1117.0px;width:146px;height:49.5px;background:#f5f9fe;border-right:1px solid #e0ebfa;border-bottom:1px solid #e0ebfa"></div><div class="t" style="left:1187px;top:1133.2px">XP</div><div class="a" style="left:1326px;top:1117.0px;width:145px;height:49.5px;background:#f5f9fe;border-right:1px solid #e0ebfa;border-bottom:1px solid #e0ebfa"></div><div class="t" style="left:1333px;top:1133.2px">抛光</div><div class="a" style="left:1471px;top:1117.0px;width:102px;height:49.5px;background:#f5f9fe;border-right:1px solid #e0ebfa;border-bottom:1px solid #e0ebfa"></div><div class="t" style="left:1471px;top:1133.2px;width:96px;text-align:right;letter-spacing:0.5px">1</div><div class="a" style="left:1573px;top:1117.0px;width:102px;height:49.5px;background:#f5f9fe;border-right:1px solid #e0ebfa;border-bottom:1px solid #e0ebfa"></div><div class="a" style="left:1675px;top:1117.0px;width:84px;height:49.5px;background:#f5f9fe;border-right:1px solid #e0ebfa;border-bottom:1px solid #e0ebfa"></div><div class="t" style="left:1682px;top:1133.2px">15m</div><div class="a" style="left:1759px;top:1117.0px;width:66px;height:49.5px;background:#f5f9fe;border-right:1px solid #e0ebfa;border-bottom:1px solid #e0ebfa"></div><div class="t" style="left:1766px;top:1133.2px">20hp</div><div class="a" style="left:1825px;top:1117.0px;width:84px;height:49.5px;background:#f5f9fe;border-right:1px solid #e0ebfa;border-bottom:1px solid #e0ebfa"></div><div class="a" style="left:1909px;top:1117.0px;width:102px;height:49.5px;background:#f5f9fe;border-right:1px solid #e0ebfa;border-bottom:1px solid #e0ebfa"></div><div class="t" style="left:1916px;top:1133.2px">ES</div><div class="a" style="left:2011px;top:1117.0px;width:130px;height:49.5px;background:#f5f9fe;border-right:1px solid #e0ebfa;border-bottom:1px solid #e0ebfa"></div><div class="a" style="left:354px;top:1166.5px;width:76px;height:49.5px;border-left:2px solid #86a8d7;border-right:2px solid #86a8d7;border-bottom:2px solid #86a8d7;background:linear-gradient(#f6f9fe,#dde9fa 50%,#c9dcf6)"></div><div class="t" style="left:364px;top:1180.8px">12</div><div class="a" style="left:976px;top:1166.5px;width:102px;height:49.5px;background:#f3faef;border-right:1px solid #e0ebfa;border-bottom:1px solid #e0ebfa"></div><div class="t" style="left:983px;top:1182.8px">输出指令</div><div class="a" style="left:1078px;top:1166.5px;width:102px;height:49.5px;background:#f3faef;border-right:1px solid #e0ebfa;border-bottom:1px solid #e0ebfa"></div><div class="t" style="left:1085px;top:1182.8px">Out000</div><div class="a" style="left:1180px;top:1166.5px;width:146px;height:49.5px;background:#f3faef;border-right:1px solid #e0ebfa;border-bottom:1px solid #e0ebfa"></div><div class="t" style="left:1187px;top:1182.8px;letter-spacing:0.5px">10001</div><div class="a" style="left:1326px;top:1166.5px;width:145px;height:49.5px;background:#f3faef;border-right:1px solid #e0ebfa;border-bottom:1px solid #e0ebfa"></div><div class="t" style="left:1333px;top:1182.8px">零件A</div><div class="a" style="left:1471px;top:1166.5px;width:102px;height:49.5px;background:#f3faef;border-right:1px solid #e0ebfa;border-bottom:1px solid #e0ebfa"></div><div class="t" style="left:1471px;top:1182.8px;width:96px;text-align:right;letter-spacing:0.5px">0</div><div class="a" style="left:1573px;top:1166.5px;width:102px;height:49.5px;background:#f3faef;border-right:1px solid #e0ebfa;border-bottom:1px solid #e0ebfa"></div><div class="a" style="left:1675px;top:1166.5px;width:84px;height:49.5px;background:#f3faef;border-right:1px solid #e0ebfa;border-bottom:1px solid #e0ebfa"></div><div class="a" style="left:1759px;top:1166.5px;width:66px;height:49.5px;background:#f3faef;border-right:1px solid #e0ebfa;border-bottom:1px solid #e0ebfa"></div><div class="t" style="left:1766px;top:1182.8px;letter-spacing:0.5px">1</div><div class="a" style="left:1825px;top:1166.5px;width:84px;height:49.5px;background:#f3faef;border-right:1px solid #e0ebfa;border-bottom:1px solid #e0ebfa"></div><div class="a" style="left:1909px;top:1166.5px;width:102px;height:49.5px;background:#f3faef;border-right:1px solid #e0ebfa;border-bottom:1px solid #e0ebfa"></div><div class="a" style="left:2011px;top:1166.5px;width:130px;height:49.5px;background:#f3faef;border-right:1px solid #e0ebfa;border-bottom:1px solid #e0ebfa"></div><svg class="a" style="left:361px;top:639px" width="11" height="14" viewBox="0 0 11 14"><path d="M2.5 1.5l6 5.5-6 5.5" fill="none" stroke="#6f9fe0" stroke-width="2.8"/></svg><div class="a" style="left:354px;top:1227px;width:1877px;height:42px;border:2px solid #86a8d7;background:linear-gradient(#fafcff,#d9e8fb 50%,#c6dcfa)"></div><div class="a" style="left:351px;top:507px;width:1.6px;height:764px;background:#77a1d6"></div><div class="a" style="left:0;top:1269.5px;width:2233px;height:1.5px;background:#7ea2d2"></div><div class="a" style="left:2232px;top:0px;width:1px;height:1271px;background:#5f6673"></div></body></html>
